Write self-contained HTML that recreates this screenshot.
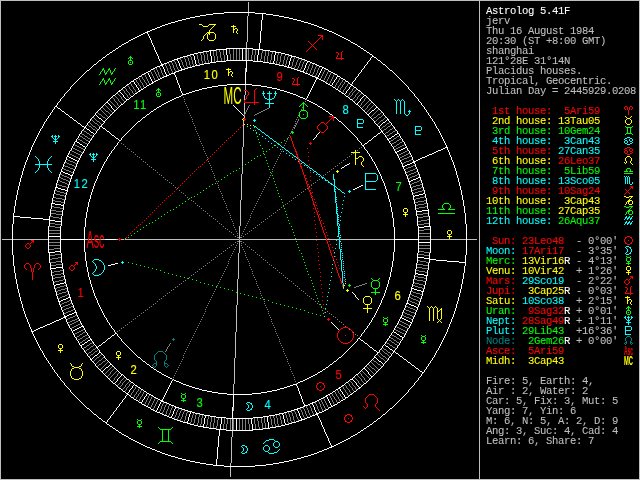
<!DOCTYPE html>
<html><head><meta charset="utf-8"><title>Astrolog 5.41F</title>
<style>
html,body{margin:0;padding:0;background:#000;}
body{width:640px;height:480px;overflow:hidden;}
svg{display:block;}
text{font-family:"Liberation Mono",monospace;font-size:10.6px;letter-spacing:-0.361px;white-space:pre;stroke-width:.08px;}
text.s{font-weight:bold;}
text.h{font-family:"Liberation Sans",sans-serif;font-size:12.5px;letter-spacing:0;stroke-width:.15px;}
text.n{font-family:"Liberation Sans",sans-serif;letter-spacing:0;stroke-width:0;}
#w{width:640px;height:480px;will-change:transform;}
</style></head><body>
<div id="w">
<svg width="640" height="480" viewBox="0 0 640 480">
<rect width="640" height="480" fill="#000"/>
<g shape-rendering="crispEdges" fill="none" stroke-width="1" transform="translate(0 .5)">
<path d="M2 239h475" stroke="#bfbfbf"/>
<path d="M248 2h1M248 3h1M248 4h1M248 5h1M248 6h1M248 7h1M248 8h1M248 9h1M248 10h1M248 11h1M248 12h1M248 13h1M248 14h1M248 15h1M247 16h1M247 17h1M247 18h1M247 19h1M247 20h1M247 21h1M247 22h1M247 23h1M247 24h1M247 25h1M247 26h1M247 27h1M247 28h1M247 29h1M247 30h1M247 31h1M247 32h1M247 33h1M247 34h1M247 35h1M247 36h1M247 37h1M247 38h1M247 39h1M247 40h1M247 41h1M246 42h1M246 43h1M246 44h1M246 45h1M246 46h1M246 47h1M246 48h1M246 49h1M246 50h1M246 51h1M246 52h1M246 53h1M246 54h1M246 55h1M246 56h1M246 57h1M246 58h1M246 59h1M246 60h1M246 61h1M246 62h1M246 63h1M246 64h1M246 65h1M246 66h1M246 67h1M245 68h1M245 69h1M245 70h1M245 71h1M245 72h1M245 73h1M245 74h1M245 75h1M245 76h1M245 77h1M245 78h1M245 79h1M245 80h1M245 81h1M245 82h1M245 83h1M245 84h1M245 85h1M245 86h1M245 87h1M245 88h1M245 89h1M245 90h1M245 91h1M245 92h1M245 93h1M245 94h1M244 95h1M244 96h1M244 97h1M244 98h1M244 99h1M244 100h1M244 101h1M244 102h1M244 103h1M244 104h1M244 105h1M244 106h1M244 107h1M244 108h1M244 109h1M244 110h1M244 111h1M244 112h1M244 113h1M244 114h1M244 115h1M244 116h1M244 117h1M244 118h1M244 119h1M244 120h1M243 121h1M243 122h1M243 123h1M243 124h1M243 125h1M243 126h1M243 127h1M243 128h1M243 129h1M243 130h1M243 131h1M243 132h1M243 133h1M243 134h1M243 135h1M243 136h1M243 137h1M243 138h1M243 139h1M243 140h1M243 141h1M243 142h1M243 143h1M243 144h1M243 145h1M243 146h1M242 147h1M242 148h1M242 149h1M242 150h1M242 151h1M242 152h1M242 153h1M242 154h1M242 155h1M242 156h1M242 157h1M242 158h1M242 159h1M242 160h1M242 161h1M242 162h1M242 163h1M242 164h1M242 165h1M242 166h1M242 167h1M242 168h1M242 169h1M242 170h1M242 171h1M242 172h1M242 173h1M241 174h1M241 175h1M241 176h1M241 177h1M241 178h1M241 179h1M241 180h1M241 181h1M241 182h1M241 183h1M241 184h1M241 185h1M241 186h1M241 187h1M241 188h1M241 189h1M241 190h1M241 191h1M241 192h1M241 193h1M241 194h1M241 195h1M241 196h1M241 197h1M241 198h1M241 199h1M240 200h1M240 201h1M240 202h1M240 203h1M240 204h1M240 205h1M240 206h1M240 207h1M240 208h1M240 209h1M240 210h1M240 211h1M240 212h1M240 213h1M240 214h1M240 215h1M240 216h1M240 217h1M240 218h1M240 219h1M240 220h1M240 221h1M240 222h1M240 223h1M240 224h1M240 225h1M239 226h1M239 227h1M239 228h1M239 229h1M239 230h1M239 231h1M239 232h1M239 233h1M239 234h1M239 235h1M239 236h1M239 237h1M239 238h1M239 239h1M239 240h1M239 241h1M239 242h1M239 243h1M239 244h1M239 245h1M239 246h1M239 247h1M239 248h1M239 249h1M239 250h1M239 251h1M239 252h1M238 253h1M238 254h1M238 255h1M238 256h1M238 257h1M238 258h1M238 259h1M238 260h1M238 261h1M238 262h1M238 263h1M238 264h1M238 265h1M238 266h1M238 267h1M238 268h1M238 269h1M238 270h1M238 271h1M238 272h1M238 273h1M238 274h1M238 275h1M238 276h1M238 277h1M238 278h1M237 279h1M237 280h1M237 281h1M237 282h1M237 283h1M237 284h1M237 285h1M237 286h1M237 287h1M237 288h1M237 289h1M237 290h1M237 291h1M237 292h1M237 293h1M237 294h1M237 295h1M237 296h1M237 297h1M237 298h1M237 299h1M237 300h1M237 301h1M237 302h1M237 303h1M237 304h1M236 305h1M236 306h1M236 307h1M236 308h1M236 309h1M236 310h1M236 311h1M236 312h1M236 313h1M236 314h1M236 315h1M236 316h1M236 317h1M236 318h1M236 319h1M236 320h1M236 321h1M236 322h1M236 323h1M236 324h1M236 325h1M236 326h1M236 327h1M236 328h1M236 329h1M236 330h1M236 331h1M235 332h1M235 333h1M235 334h1M235 335h1M235 336h1M235 337h1M235 338h1M235 339h1M235 340h1M235 341h1M235 342h1M235 343h1M235 344h1M235 345h1M235 346h1M235 347h1M235 348h1M235 349h1M235 350h1M235 351h1M235 352h1M235 353h1M235 354h1M235 355h1M235 356h1M235 357h1M234 358h1M234 359h1M234 360h1M234 361h1M234 362h1M234 363h1M234 364h1M234 365h1M234 366h1M234 367h1M234 368h1M234 369h1M234 370h1M234 371h1M234 372h1M234 373h1M234 374h1M234 375h1M234 376h1M234 377h1M234 378h1M234 379h1M234 380h1M234 381h1M234 382h1M234 383h1M233 384h1M233 385h1M233 386h1M233 387h1M233 388h1M233 389h1M233 390h1M233 391h1M233 392h1M233 393h1M233 394h1M233 395h1M233 396h1M233 397h1M233 398h1M233 399h1M233 400h1M233 401h1M233 402h1M233 403h1M233 404h1M233 405h1M233 406h1M233 407h1M233 408h1M233 409h1M233 410h1M232 411h1M232 412h1M232 413h1M232 414h1M232 415h1M232 416h1M232 417h1M232 418h1M232 419h1M232 420h1M232 421h1M232 422h1M232 423h1M232 424h1M232 425h1M232 426h1M232 427h1M232 428h1M232 429h1M232 430h1M232 431h1M232 432h1M232 433h1M232 434h1M232 435h1M232 436h1M231 437h1M231 438h1M231 439h1M231 440h1M231 441h1M231 442h1M231 443h1M231 444h1M231 445h1M231 446h1M231 447h1M231 448h1M231 449h1M231 450h1M231 451h1M231 452h1M231 453h1M231 454h1M231 455h1M231 456h1M231 457h1M231 458h1M231 459h1M231 460h1M231 461h1M231 462h1M230 463h1M230 464h1M230 465h1M230 466h1M230 467h1M230 468h1M230 469h1M230 470h1M230 471h1M230 472h1M230 473h1M230 474h1M230 475h1M230 476h1" stroke="#bfbfbf"/>
<path d="M233 48h1M236 48h1M239 48h1M245 48h1M219 49h1M223 49h1M229 49h1M233 49h1M236 49h1M239 49h1M245 49h1M248 49h1M252 49h1M255 49h1M213 50h1M216 50h1M219 50h1M223 50h1M229 50h1M233 50h1M236 50h1M239 50h1M245 50h1M248 50h1M252 50h1M255 50h1M262 50h1M265 50h1M206 51h1M213 51h1M216 51h1M219 51h1M223 51h1M229 51h1M233 51h1M236 51h1M239 51h1M245 51h1M248 51h1M252 51h1M255 51h1M262 51h1M265 51h1M268 51h1M272 51h1M200 52h1M203 52h1M206 52h1M213 52h1M216 52h1M220 52h1M223 52h1M229 52h1M233 52h1M236 52h1M239 52h1M245 52h1M248 52h1M252 52h1M255 52h1M262 52h1M265 52h1M268 52h1M272 52h1M278 52h1M196 53h1M200 53h1M203 53h1M206 53h1M213 53h1M216 53h1M220 53h1M223 53h1M229 53h1M233 53h1M236 53h1M239 53h1M245 53h1M248 53h1M252 53h1M255 53h1M261 53h1M265 53h1M268 53h1M272 53h1M278 53h1M281 53h1M196 54h1M200 54h1M203 54h1M207 54h1M213 54h1M216 54h1M220 54h1M223 54h1M230 54h1M233 54h1M236 54h1M239 54h1M245 54h1M248 54h1M252 54h1M255 54h1M261 54h1M265 54h1M268 54h1M271 54h1M278 54h1M281 54h1M285 54h1M190 55h1M197 55h1M201 55h1M204 55h1M207 55h1M213 55h1M216 55h1M220 55h1M224 55h1M230 55h1M233 55h1M236 55h1M239 55h1M245 55h1M248 55h1M251 55h1M254 55h1M261 55h1M265 55h1M268 55h1M271 55h1M277 55h1M281 55h1M285 55h1M288 55h1M187 56h1M190 56h1M197 56h1M201 56h1M204 56h1M207 56h1M214 56h1M217 56h1M220 56h1M224 56h1M230 56h1M233 56h1M236 56h1M239 56h1M245 56h1M248 56h1M251 56h1M254 56h1M261 56h1M264 56h1M267 56h1M271 56h1M277 56h1M280 56h1M284 56h1M288 56h1M184 57h1M187 57h1M191 57h1M197 57h1M201 57h1M204 57h1M207 57h1M214 57h1M217 57h1M220 57h1M224 57h1M230 57h1M233 57h1M236 57h1M239 57h1M245 57h1M248 57h1M251 57h1M254 57h1M261 57h1M264 57h1M267 57h1M271 57h1M277 57h1M280 57h1M284 57h1M287 57h1M294 57h1M180 58h1M184 58h1M188 58h1M191 58h1M197 58h1M201 58h1M204 58h1M207 58h1M214 58h1M217 58h1M221 58h1M224 58h1M230 58h1M233 58h1M236 58h1M239 58h1M245 58h1M248 58h1M251 58h1M254 58h1M261 58h1M264 58h1M267 58h1M271 58h1M277 58h1M280 58h1M284 58h1M287 58h1M294 58h1M298 58h1M180 59h1M185 59h1M188 59h1M191 59h1M198 59h1M201 59h1M204 59h1M207 59h1M214 59h1M217 59h1M221 59h1M224 59h1M230 59h1M233 59h1M236 59h1M239 59h1M245 59h1M248 59h1M251 59h1M254 59h1M260 59h1M264 59h1M267 59h1M271 59h1M277 59h1M280 59h1M284 59h1M287 59h1M293 59h1M298 59h1M301 59h1M174 60h1M181 60h1M185 60h1M188 60h1M192 60h1M198 60h1M201 60h1M204 60h1M208 60h1M214 60h1M217 60h1M221 60h1M224 60h1M251 60h1M254 60h1M260 60h1M264 60h1M267 60h1M270 60h1M277 60h1M280 60h1M283 60h1M286 60h1M293 60h1M297 60h1M301 60h1M304 60h1M171 61h1M174 61h1M181 61h1M185 61h1M189 61h1M192 61h1M198 61h1M202 61h1M205 61h1M208 61h1M214 61h1M217 61h1M260 61h1M264 61h1M267 61h1M270 61h1M276 61h1M280 61h1M283 61h1M286 61h1M293 61h1M297 61h1M300 61h1M304 61h1M168 62h1M171 62h1M175 62h1M182 62h1M186 62h1M189 62h1M192 62h1M198 62h1M202 62h1M205 62h1M208 62h1M270 62h1M276 62h1M279 62h1M283 62h1M286 62h1M292 62h1M296 62h1M300 62h1M303 62h1M310 62h1M168 63h1M172 63h1M175 63h1M182 63h1M186 63h1M189 63h1M192 63h1M199 63h1M202 63h1M205 63h1M276 63h1M279 63h1M283 63h1M286 63h1M292 63h1M296 63h1M299 63h1M303 63h1M310 63h1M313 63h1M165 64h1M169 64h1M172 64h1M176 64h1M182 64h1M186 64h1M189 64h1M193 64h1M199 64h1M279 64h1M282 64h1M285 64h1M292 64h1M296 64h1M299 64h1M302 64h1M309 64h1M313 64h1M165 65h1M169 65h1M173 65h1M176 65h1M183 65h1M186 65h1M190 65h1M193 65h1M282 65h1M285 65h1M292 65h1M295 65h1M299 65h1M302 65h1M309 65h1M312 65h1M316 65h1M159 66h1M166 66h1M170 66h1M173 66h1M176 66h1M183 66h1M187 66h1M190 66h1M291 66h1M295 66h1M298 66h1M302 66h1M308 66h1M312 66h1M316 66h1M319 66h1M159 67h1M166 67h1M170 67h1M173 67h1M177 67h1M184 67h1M187 67h1M291 67h1M294 67h1M298 67h1M301 67h1M308 67h1M312 67h1M315 67h1M319 67h1M156 68h1M160 68h1M167 68h1M170 68h1M174 68h1M177 68h1M184 68h1M294 68h1M297 68h1M301 68h1M308 68h1M311 68h1M315 68h1M318 68h1M153 69h1M156 69h1M160 69h1M167 69h1M171 69h1M174 69h1M178 69h1M297 69h1M300 69h1M307 69h1M311 69h1M314 69h1M318 69h1M325 69h1M154 70h1M157 70h1M161 70h1M167 70h1M171 70h1M175 70h1M178 70h1M300 70h1M307 70h1M310 70h1M314 70h1M317 70h1M324 70h1M150 71h1M154 71h1M157 71h1M161 71h1M168 71h1M172 71h1M175 71h1M306 71h1M310 71h1M314 71h1M317 71h1M324 71h1M328 71h1M151 72h1M155 72h1M158 72h1M161 72h1M168 72h1M172 72h1M306 72h1M310 72h1M313 72h1M317 72h1M323 72h1M327 72h1M331 72h1M151 73h1M155 73h1M158 73h1M162 73h1M169 73h1M309 73h1M313 73h1M316 73h1M323 73h1M327 73h1M330 73h1M144 74h1M152 74h1M156 74h1M158 74h1M162 74h1M169 74h1M309 74h1M312 74h1M316 74h1M322 74h1M326 74h1M330 74h1M334 74h1M145 75h1M152 75h1M156 75h1M159 75h1M163 75h1M312 75h1M315 75h1M322 75h1M326 75h1M329 75h1M333 75h1M141 76h1M145 76h1M153 76h1M157 76h1M159 76h1M163 76h1M315 76h1M321 76h1M325 76h1M329 76h1M333 76h1M138 77h1M142 77h1M146 77h1M153 77h1M157 77h1M160 77h1M321 77h1M325 77h1M328 77h1M332 77h1M340 77h1M139 78h1M142 78h1M146 78h1M154 78h1M158 78h1M160 78h1M320 78h1M324 78h1M328 78h1M332 78h1M339 78h1M135 79h1M139 79h1M143 79h1M147 79h1M154 79h1M158 79h1M320 79h1M324 79h1M327 79h1M331 79h1M339 79h1M343 79h1M136 80h1M140 80h1M144 80h1M147 80h1M155 80h1M323 80h1M327 80h1M331 80h1M338 80h1M342 80h1M136 81h1M140 81h1M144 81h1M148 81h1M326 81h1M330 81h1M338 81h1M342 81h1M345 81h1M137 82h1M141 82h1M145 82h1M148 82h1M326 82h1M330 82h1M337 82h1M341 82h1M344 82h1M130 83h1M138 83h1M142 83h1M146 83h1M149 83h1M329 83h1M336 83h1M340 83h1M344 83h1M348 83h1M131 84h1M138 84h1M142 84h1M146 84h1M336 84h1M340 84h1M343 84h1M347 84h1M127 85h1M131 85h1M139 85h1M143 85h1M147 85h1M335 85h1M339 85h1M342 85h1M347 85h1M128 86h1M132 86h1M140 86h1M143 86h1M335 86h1M338 86h1M342 86h1M346 86h1M124 87h1M129 87h1M133 87h1M140 87h1M144 87h1M334 87h1M338 87h1M341 87h1M345 87h1M354 87h1M125 88h1M129 88h1M133 88h1M141 88h1M337 88h1M340 88h1M345 88h1M353 88h1M122 89h1M126 89h1M130 89h1M134 89h1M340 89h1M344 89h1M352 89h1M356 89h1M123 90h1M126 90h1M131 90h1M135 90h1M339 90h1M343 90h1M352 90h1M355 90h1M124 91h1M127 91h1M132 91h1M135 91h1M343 91h1M351 91h1M354 91h1M359 91h1M124 92h1M128 92h1M132 92h1M136 92h1M342 92h1M350 92h1M353 92h1M358 92h1M117 93h1M125 93h1M129 93h1M133 93h1M349 93h1M352 93h1M357 93h1M361 93h1M118 94h1M126 94h1M129 94h1M134 94h1M349 94h1M352 94h1M356 94h1M360 94h1M114 95h1M119 95h1M127 95h1M130 95h1M348 95h1M351 95h1M355 95h1M359 95h1M115 96h1M120 96h1M127 96h1M131 96h1M347 96h1M350 96h1M355 96h1M358 96h1M112 97h1M116 97h1M121 97h1M128 97h1M349 97h1M354 97h1M357 97h1M366 97h1M113 98h1M117 98h1M121 98h1M353 98h1M357 98h1M365 98h1M114 99h1M118 99h1M122 99h1M352 99h1M356 99h1M364 99h1M109 100h1M114 100h1M118 100h1M123 100h1M355 100h1M364 100h1M369 100h1M110 101h1M115 101h1M119 101h1M124 101h1M354 101h1M363 101h1M368 101h1M111 102h1M116 102h1M120 102h1M362 102h1M367 102h1M371 102h1M112 103h1M117 103h1M121 103h1M361 103h1M366 103h1M370 103h1M104 104h1M113 104h1M117 104h1M361 104h1M365 104h1M369 104h1M374 104h1M105 105h1M114 105h1M118 105h1M360 105h1M364 105h1M368 105h1M373 105h1M106 106h1M115 106h1M119 106h1M359 106h1M363 106h1M367 106h1M372 106h1M102 107h1M107 107h1M116 107h1M362 107h1M367 107h1M371 107h1M103 108h1M108 108h1M117 108h1M361 108h1M366 108h1M370 108h1M100 109h1M104 109h1M109 109h1M365 109h1M369 109h1M378 109h1M101 110h1M105 110h1M110 110h1M364 110h1M368 110h1M377 110h1M102 111h1M106 111h2M111 111h1M367 111h1M376 111h1M97 112h1M103 112h1M108 112h1M112 112h1M366 112h1M375 112h1M381 112h1M98 113h1M104 113h1M109 113h1M374 113h1M380 113h1M99 114h2M105 114h1M110 114h1M373 114h1M378 114h2M383 114h1M101 115h1M106 115h1M372 115h1M377 115h1M382 115h1M102 116h1M107 116h1M371 116h1M376 116h1M381 116h1M93 117h1M103 117h2M108 117h1M370 117h1M374 117h2M379 117h2M385 117h1M94 118h1M105 118h1M373 118h1M378 118h1M384 118h1M91 119h1M95 119h1M106 119h1M372 119h1M377 119h1M383 119h1M92 120h1M96 120h1M376 120h1M381 120h2M93 121h1M97 121h2M375 121h1M380 121h1M89 122h1M94 122h1M99 122h1M379 122h1M389 122h1M90 123h1M95 123h2M100 123h1M378 123h1M387 123h2M87 124h1M91 124h1M97 124h1M101 124h1M377 124h1M386 124h1M391 124h1M88 125h1M92 125h1M98 125h1M385 125h1M390 125h1M89 126h2M93 126h2M99 126h1M383 126h2M388 126h2M91 127h1M95 127h1M382 127h1M387 127h1M393 127h1M92 128h1M96 128h1M381 128h1M386 128h1M392 128h1M93 129h2M97 129h1M384 129h2M390 129h2M83 130h1M95 130h1M383 130h1M389 130h1M395 130h1M84 131h2M96 131h1M382 131h1M388 131h1M393 131h2M86 132h1M386 132h2M392 132h1M81 133h1M87 133h2M385 133h1M390 133h2M82 134h2M89 134h1M384 134h1M389 134h1M79 135h1M84 135h1M90 135h2M387 135h2M399 135h1M80 136h2M85 136h2M92 136h1M386 136h1M397 136h2M82 137h1M87 137h1M396 137h1M77 138h1M83 138h2M88 138h2M394 138h2M401 138h1M78 139h2M85 139h1M90 139h1M393 139h1M399 139h2M80 140h2M86 140h2M391 140h2M397 140h2M82 141h1M88 141h1M390 141h1M396 141h1M402 141h1M83 142h2M394 142h2M400 142h2M85 143h2M392 143h2M399 143h1M74 144h1M87 144h1M391 144h1M397 144h2M404 144h1M75 145h2M396 145h1M402 145h2M77 146h2M394 146h2M400 146h2M72 147h1M79 147h2M393 147h1M398 147h2M73 148h2M81 148h2M396 148h2M75 149h2M83 149h1M395 149h1M71 150h1M77 150h2M407 150h1M72 151h2M79 151h2M405 151h2M74 152h2M81 152h2M403 152h2M69 153h1M76 153h2M401 153h2M408 153h2M70 154h2M78 154h2M399 154h2M406 154h2M72 155h2M80 155h1M398 155h1M404 155h2M74 156h2M402 156h2M409 156h2M76 157h2M400 157h2M407 157h2M78 158h2M399 158h1M404 158h3M66 159h2M402 159h2M411 159h2M68 160h2M400 160h2M409 160h2M70 161h3M406 161h3M65 162h2M73 162h2M404 162h2M67 163h2M75 163h2M402 163h2M69 164h3M63 165h2M72 165h2M413 165h2M65 166h3M74 166h2M411 166h2M68 167h2M408 167h3M62 168h2M70 168h3M406 168h2M415 168h2M64 169h2M73 169h2M404 169h2M413 169h2M66 170h3M410 170h3M69 171h2M408 171h2M416 171h2M71 172h2M406 172h2M414 172h2M411 173h3M60 174h2M409 174h2M417 174h2M62 175h2M407 175h2M415 175h2M64 176h3M412 176h3M59 177h2M67 177h2M410 177h2M61 178h2M69 178h2M408 178h2M63 179h3M58 180h2M66 180h2M419 180h2M60 181h2M68 181h2M417 181h2M62 182h3M414 182h3M65 183h2M412 183h2M57 184h2M67 184h2M410 184h2M420 184h2M59 185h3M416 185h4M62 186h4M413 186h3M66 187h2M411 187h2M421 187h2M417 188h4M414 189h3M55 190h2M412 190h2M422 190h2M57 191h3M418 191h4M60 192h4M415 192h3M54 193h2M64 193h2M413 193h2M56 194h4M60 195h4M64 196h2M424 196h2M53 197h3M420 197h4M56 198h6M416 198h4M62 199h3M414 199h2M52 200h3M424 200h3M55 201h6M418 201h6M61 202h3M415 202h3M424 203h3M418 204h6M415 205h3M51 206h3M425 206h3M54 207h6M419 207h6M60 208h3M416 208h3M51 210h5M56 211h6M50 213h6M423 213h6M56 214h6M417 214h6M50 216h3M423 216h6M53 217h6M417 217h6M59 218h3M427 219h3M421 220h6M418 221h3M49 223h6M424 223h6M55 224h6M418 224h6M49 226h6M55 227h6M424 229h6M49 230h11M419 230h5M48 233h12M419 233h12M419 236h12M48 239h12M419 239h12M48 242h12M48 245h12M419 245h12M54 248h6M419 248h11M49 249h5M418 251h6M424 252h6M55 254h6M418 254h6M49 255h6M424 255h6M58 257h3M52 258h6M49 259h3M417 260h3M56 261h6M420 261h6M50 262h6M426 262h3M56 264h6M417 264h6M50 265h6M423 265h6M417 267h5M422 268h6M60 270h3M416 270h3M54 271h6M419 271h6M51 272h3M425 272h3M61 273h3M55 274h6M52 275h3M61 276h3M415 276h3M55 277h6M418 277h6M52 278h3M424 278h3M63 279h2M414 279h3M59 280h4M417 280h6M55 281h4M423 281h3M53 282h2M413 282h2M415 283h4M419 284h4M64 285h2M413 285h2M423 285h2M60 286h4M415 286h3M57 287h3M418 287h4M55 288h2M65 288h2M422 288h2M61 289h4M58 290h3M56 291h2M66 291h2M411 291h2M62 292h4M413 292h3M59 293h3M416 293h4M57 294h2M67 294h2M410 294h2M420 294h2M65 295h2M412 295h2M62 296h3M414 296h3M60 297h2M409 297h2M417 297h2M58 298h2M411 298h2M419 298h2M413 299h3M69 300h2M408 300h2M416 300h2M67 301h2M410 301h2M418 301h2M64 302h3M412 302h3M62 303h2M70 303h2M415 303h2M60 304h2M68 304h2M417 304h2M65 305h3M63 306h2M71 306h2M406 306h2M61 307h2M69 307h2M408 307h2M66 308h3M410 308h3M64 309h2M73 309h2M404 309h2M413 309h2M62 310h2M71 310h2M406 310h3M415 310h2M68 311h3M409 311h2M66 312h2M403 312h2M411 312h3M64 313h2M405 313h2M414 313h2M407 314h3M75 315h2M402 315h2M410 315h2M73 316h2M404 316h2M412 316h2M70 317h3M406 317h3M68 318h2M77 318h2M409 318h2M66 319h2M75 319h2M411 319h2M72 320h3M78 320h2M399 320h1M70 321h2M76 321h2M400 321h2M68 322h2M74 322h2M402 322h2M72 323h2M80 323h1M398 323h1M404 323h2M70 324h2M78 324h2M399 324h2M406 324h2M69 325h1M76 325h2M401 325h2M408 325h2M74 326h2M396 326h1M403 326h2M72 327h2M397 327h2M405 327h2M71 328h1M399 328h2M407 328h1M83 329h1M395 329h1M401 329h2M81 330h2M396 330h2M403 330h2M79 331h2M85 331h1M398 331h2M405 331h2M77 332h2M83 332h2M400 332h2M75 333h2M82 333h1M402 333h2M74 334h1M80 334h2M87 334h1M391 334h1M404 334h1M79 335h1M85 335h2M392 335h2M77 336h2M83 336h2M394 336h2M76 337h1M82 337h1M88 337h1M390 337h1M396 337h1M80 338h2M86 338h2M391 338h2M397 338h2M78 339h2M85 339h1M388 339h1M393 339h1M399 339h2M77 340h1M83 340h2M389 340h2M394 340h2M401 340h1M82 341h1M391 341h1M396 341h1M80 342h2M92 342h1M386 342h1M392 342h2M397 342h2M79 343h1M90 343h2M387 343h2M394 343h1M399 343h1M89 344h1M94 344h1M389 344h1M395 344h2M87 345h2M93 345h1M390 345h2M397 345h1M86 346h1M91 346h2M392 346h1M84 347h2M90 347h1M96 347h1M382 347h1M393 347h2M83 348h1M89 348h1M95 348h1M383 348h1M395 348h1M87 349h2M93 349h2M381 349h1M384 349h2M86 350h1M92 350h1M97 350h1M382 350h1M386 350h1M85 351h1M91 351h1M95 351h2M383 351h1M387 351h1M89 352h2M94 352h1M379 352h1M384 352h1M388 352h2M88 353h1M93 353h1M380 353h1M385 353h2M390 353h1M87 354h1M91 354h2M101 354h1M377 354h1M381 354h1M387 354h1M391 354h1M90 355h1M100 355h1M378 355h1M382 355h1M388 355h1M89 356h1M99 356h1M379 356h1M383 356h2M389 356h1M97 357h2M103 357h1M380 357h1M385 357h1M96 358h1M102 358h1M381 358h2M386 358h1M95 359h1M101 359h1M106 359h1M372 359h1M383 359h1M387 359h1M94 360h1M99 360h2M105 360h1M373 360h1M384 360h1M93 361h1M98 361h1M103 361h2M108 361h1M370 361h1M374 361h2M385 361h1M97 362h1M102 362h1M107 362h1M371 362h1M376 362h1M96 363h1M101 363h1M106 363h1M372 363h1M377 363h1M95 364h1M99 364h2M105 364h1M368 364h1M373 364h1M378 364h2M98 365h1M104 365h1M369 365h1M374 365h1M380 365h1M97 366h1M103 366h1M112 366h1M366 366h1M370 366h1M375 366h1M381 366h1M102 367h1M111 367h1M367 367h1M371 367h1M376 367h1M101 368h1M110 368h1M114 368h1M368 368h1M372 368h2M377 368h1M100 369h1M109 369h1M113 369h1M369 369h1M374 369h1M378 369h1M108 370h1M112 370h1M117 370h1M361 370h1M370 370h1M375 370h1M107 371h1M111 371h1M116 371h1M362 371h1M371 371h1M376 371h1M106 372h1M110 372h1M115 372h1M119 372h1M359 372h1M363 372h1M372 372h1M105 373h1M110 373h1M114 373h1M118 373h1M360 373h1M364 373h1M373 373h1M104 374h1M109 374h1M113 374h1M117 374h1M361 374h1M365 374h1M374 374h1M108 375h1M112 375h1M117 375h1M357 375h1M361 375h1M366 375h1M107 376h1M111 376h1M116 376h1M358 376h1M362 376h1M367 376h1M110 377h1M115 377h1M124 377h1M354 377h1M359 377h1M363 377h1M368 377h1M109 378h1M114 378h1M123 378h1M355 378h1M360 378h1M364 378h1M369 378h1M114 379h1M122 379h1M126 379h1M356 379h1M361 379h1M364 379h1M113 380h1M121 380h1M125 380h1M357 380h1M361 380h1M365 380h1M112 381h1M120 381h1M124 381h1M129 381h1M350 381h1M358 381h1M362 381h1M366 381h1M120 382h1M123 382h1M128 382h1M131 382h1M347 382h1M351 382h1M358 382h1M363 382h1M119 383h1M122 383h1M127 383h1M130 383h1M348 383h1M352 383h1M359 383h1M364 383h1M118 384h1M122 384h1M126 384h1M129 384h1M344 384h1M349 384h1M352 384h1M360 384h1M117 385h1M121 385h1M125 385h1M129 385h1M345 385h1M349 385h1M353 385h1M361 385h1M120 386h1M125 386h1M128 386h1M136 386h1M342 386h1M346 386h1M350 386h1M354 386h1M119 387h1M124 387h1M127 387h1M135 387h1M343 387h1M346 387h1M351 387h1M355 387h1M123 388h1M126 388h1M135 388h1M139 388h1M343 388h1M347 388h1M352 388h1M355 388h1M122 389h1M126 389h1M134 389h1M138 389h1M344 389h1M348 389h1M352 389h1M356 389h1M125 390h1M133 390h1M138 390h1M141 390h1M337 390h1M345 390h1M349 390h1M353 390h1M124 391h1M133 391h1M137 391h1M140 391h1M144 391h1M334 391h1M338 391h1M345 391h1M349 391h1M354 391h1M132 392h1M136 392h1M140 392h1M143 392h1M335 392h1M338 392h1M346 392h1M350 392h1M131 393h1M136 393h1M139 393h1M143 393h1M331 393h1M335 393h1M339 393h1M347 393h1M351 393h1M131 394h1M135 394h1M138 394h1M142 394h1M332 394h1M336 394h1M340 394h1M347 394h1M130 395h1M134 395h1M138 395h1M142 395h1M149 395h1M329 395h1M332 395h1M336 395h1M340 395h1M348 395h1M134 396h1M137 396h1M141 396h1M148 396h1M152 396h1M330 396h1M333 396h1M337 396h1M341 396h1M133 397h1M136 397h1M140 397h1M148 397h1M151 397h1M330 397h1M334 397h1M338 397h1M342 397h1M136 398h1M140 398h1M147 398h1M151 398h1M155 398h1M323 398h1M331 398h1M334 398h1M338 398h1M342 398h1M135 399h1M139 399h1M147 399h1M150 399h1M154 399h1M158 399h1M320 399h1M324 399h1M331 399h1M335 399h1M339 399h1M343 399h1M139 400h1M146 400h1M150 400h1M154 400h1M157 400h1M318 400h1M321 400h1M324 400h1M332 400h1M336 400h1M339 400h1M138 401h1M146 401h1M149 401h1M153 401h1M157 401h1M318 401h1M321 401h1M325 401h1M332 401h1M336 401h1M340 401h1M145 402h1M149 402h1M153 402h1M156 402h1M163 402h1M315 402h1M319 402h1M322 402h1M325 402h1M333 402h1M337 402h1M145 403h1M148 403h1M152 403h1M156 403h1M163 403h1M166 403h1M315 403h1M319 403h1M322 403h1M326 403h1M333 403h1M144 404h1M148 404h1M152 404h1M155 404h1M162 404h1M166 404h1M169 404h1M309 404h1M316 404h1M320 404h1M323 404h1M326 404h1M334 404h1M147 405h1M151 405h1M155 405h1M162 405h1M165 405h1M169 405h1M309 405h1M316 405h1M320 405h1M323 405h1M327 405h1M147 406h1M151 406h1M154 406h1M161 406h1M165 406h1M168 406h1M172 406h1M306 406h1M310 406h1M317 406h1M320 406h1M324 406h1M327 406h1M150 407h1M154 407h1M161 407h1M164 407h1M168 407h1M172 407h1M303 407h1M306 407h1M310 407h1M317 407h1M321 407h1M324 407h1M328 407h1M153 408h1M161 408h1M164 408h1M168 408h1M171 408h1M178 408h1M300 408h1M303 408h1M307 408h1M311 408h1M317 408h1M321 408h1M325 408h1M153 409h1M160 409h1M164 409h1M167 409h1M171 409h1M178 409h1M181 409h1M300 409h1M304 409h1M307 409h1M311 409h1M318 409h1M322 409h1M325 409h1M160 410h1M163 410h1M167 410h1M170 410h1M177 410h1M181 410h1M184 410h1M294 410h1M301 410h1M304 410h1M308 410h1M311 410h1M318 410h1M322 410h1M159 411h1M163 411h1M166 411h1M170 411h1M177 411h1M180 411h1M184 411h1M187 411h1M291 411h1M294 411h1M301 411h1M305 411h1M308 411h1M312 411h1M319 411h1M159 412h1M162 412h1M166 412h1M170 412h1M176 412h1M180 412h1M183 412h1M187 412h1M288 412h1M291 412h1M295 412h1M302 412h1M305 412h1M308 412h1M312 412h1M319 412h1M162 413h1M166 413h1M169 413h1M176 413h1M179 413h1M183 413h1M186 413h1M193 413h1M196 413h1M285 413h1M288 413h1M292 413h1M295 413h1M302 413h1M305 413h1M309 413h1M313 413h1M165 414h1M169 414h1M176 414h1M179 414h1M182 414h1M186 414h1M193 414h1M196 414h1M199 414h1M279 414h1M285 414h1M289 414h1M292 414h1M296 414h1M302 414h1M306 414h1M309 414h1M313 414h1M165 415h1M168 415h1M175 415h1M179 415h1M182 415h1M186 415h1M192 415h1M195 415h1M199 415h1M202 415h1M273 415h1M276 415h1M279 415h1M286 415h1M289 415h1M292 415h1M296 415h1M303 415h1M306 415h1M310 415h1M168 416h1M175 416h1M178 416h1M182 416h1M185 416h1M192 416h1M195 416h1M199 416h1M202 416h1M208 416h1M270 416h1M273 416h1M276 416h1M280 416h1M286 416h1M289 416h1M293 416h1M296 416h1M303 416h1M307 416h1M310 416h1M174 417h1M178 417h1M181 417h1M185 417h1M192 417h1M195 417h1M198 417h1M202 417h1M208 417h1M211 417h1M214 417h1M218 417h1M261 417h1M264 417h1M270 417h1M273 417h1M276 417h1M280 417h1M286 417h1M290 417h1M293 417h1M297 417h1M304 417h1M307 417h1M174 418h1M177 418h1M181 418h1M185 418h1M191 418h1M195 418h1M198 418h1M201 418h1M208 418h1M211 418h1M214 418h1M218 418h1M224 418h1M227 418h1M254 418h1M257 418h1M261 418h1M264 418h1M270 418h1M274 418h1M277 418h1M280 418h1M287 418h1M290 418h1M293 418h1M297 418h1M304 418h1M177 419h1M180 419h1M185 419h1M191 419h1M194 419h1M198 419h1M201 419h1M207 419h1M211 419h1M214 419h1M218 419h1M224 419h1M227 419h1M230 419h1M233 419h1M239 419h1M242 419h1M245 419h1M248 419h1M254 419h1M257 419h1M261 419h1M264 419h1M271 419h1M274 419h1M277 419h1M280 419h1M287 419h1M290 419h1M293 419h1M298 419h1M180 420h1M184 420h1M191 420h1M194 420h1M198 420h1M201 420h1M207 420h1M211 420h1M214 420h1M217 420h1M224 420h1M227 420h1M230 420h1M233 420h1M239 420h1M242 420h1M245 420h1M248 420h1M254 420h1M257 420h1M261 420h1M264 420h1M271 420h1M274 420h1M277 420h1M281 420h1M287 420h1M290 420h1M294 420h1M298 420h1M184 421h1M191 421h1M194 421h1M198 421h1M201 421h1M207 421h1M211 421h1M214 421h1M217 421h1M224 421h1M227 421h1M230 421h1M233 421h1M239 421h1M242 421h1M245 421h1M248 421h1M254 421h1M258 421h1M261 421h1M264 421h1M271 421h1M274 421h1M277 421h1M281 421h1M287 421h1M291 421h1M294 421h1M190 422h1M194 422h1M198 422h1M201 422h1M207 422h1M210 422h1M214 422h1M217 422h1M224 422h1M227 422h1M230 422h1M233 422h1M239 422h1M242 422h1M245 422h1M248 422h1M254 422h1M258 422h1M261 422h1M264 422h1M271 422h1M274 422h1M277 422h1M281 422h1M288 422h1M291 422h1M190 423h1M193 423h1M197 423h1M201 423h1M207 423h1M210 423h1M213 423h1M217 423h1M224 423h1M227 423h1M230 423h1M233 423h1M239 423h1M242 423h1M245 423h1M248 423h1M254 423h1M258 423h1M262 423h1M265 423h1M271 423h1M274 423h1M277 423h1M281 423h1M288 423h1M193 424h1M197 424h1M200 424h1M207 424h1M210 424h1M213 424h1M217 424h1M223 424h1M226 424h1M230 424h1M233 424h1M239 424h1M242 424h1M245 424h1M249 424h1M255 424h1M258 424h1M262 424h1M265 424h1M271 424h1M275 424h1M278 424h1M282 424h1M197 425h1M200 425h1M206 425h1M210 425h1M213 425h1M217 425h1M223 425h1M226 425h1M230 425h1M233 425h1M239 425h1M242 425h1M245 425h1M249 425h1M255 425h1M258 425h1M262 425h1M265 425h1M272 425h1M275 425h1M278 425h1M282 425h1M200 426h1M206 426h1M210 426h1M213 426h1M216 426h1M223 426h1M226 426h1M230 426h1M233 426h1M239 426h1M242 426h1M245 426h1M249 426h1M255 426h1M258 426h1M262 426h1M265 426h1M272 426h1M275 426h1M278 426h1M206 427h1M210 427h1M213 427h1M216 427h1M223 427h1M226 427h1M230 427h1M233 427h1M239 427h1M242 427h1M245 427h1M249 427h1M255 427h1M259 427h1M262 427h1M265 427h1M272 427h1M213 428h1M216 428h1M223 428h1M226 428h1M230 428h1M233 428h1M239 428h1M242 428h1M245 428h1M249 428h1M255 428h1M259 428h1M262 428h1M265 428h1M223 429h1M226 429h1M230 429h1M233 429h1M239 429h1M242 429h1M245 429h1M249 429h1M255 429h1M259 429h1M233 430h1M239 430h1M242 430h1M245 430h1" stroke="#7f7f7f"/>
<path d="M242 48h1M226 49h1M242 49h1M258 49h1M226 50h1M242 50h1M258 50h1M210 51h1M226 51h1M242 51h1M258 51h1M210 52h1M226 52h1M242 52h1M258 52h1M275 52h1M210 53h1M226 53h1M242 53h1M258 53h1M275 53h1M193 54h1M210 54h1M226 54h1M242 54h1M258 54h1M275 54h1M193 55h1M210 55h1M227 55h1M242 55h1M257 55h1M274 55h1M194 56h1M211 56h1M227 56h1M242 56h1M257 56h1M274 56h1M291 56h1M194 57h1M211 57h1M227 57h1M242 57h1M257 57h1M274 57h1M291 57h1M194 58h1M211 58h1M227 58h1M242 58h1M257 58h1M274 58h1M290 58h1M177 59h1M194 59h1M211 59h1M227 59h1M242 59h1M257 59h1M274 59h1M290 59h1M177 60h1M195 60h1M211 60h1M227 60h1M257 60h1M274 60h1M290 60h1M178 61h1M195 61h1M211 61h1M273 61h1M289 61h1M307 61h1M178 62h1M195 62h1M273 62h1M289 62h1M307 62h1M179 63h1M195 63h1M273 63h1M289 63h1M306 63h1M179 64h1M196 64h1M289 64h1M306 64h1M162 65h1M179 65h1M196 65h1M288 65h1M305 65h1M162 66h1M180 66h1M288 66h1M305 66h1M163 67h1M180 67h1M305 67h1M163 68h1M181 68h1M304 68h1M322 68h1M164 69h1M181 69h1M304 69h1M321 69h1M164 70h1M303 70h1M321 70h1M164 71h1M303 71h1M320 71h1M147 72h1M165 72h1M320 72h1M148 73h1M165 73h1M319 73h1M148 74h1M166 74h1M319 74h1M149 75h1M166 75h1M318 75h1M149 76h1M318 76h1M337 76h1M150 77h1M317 77h1M336 77h1M150 78h1M336 78h1M151 79h1M335 79h1M151 80h1M334 80h1M133 81h1M152 81h1M334 81h1M134 82h1M152 82h1M333 82h1M134 83h1M332 83h1M135 84h1M332 84h1M136 85h1M331 85h1M351 85h1M136 86h1M350 86h1M137 87h1M349 87h1M138 88h1M349 88h1M138 89h1M348 89h1M139 90h1M347 90h1M119 91h1M346 91h1M120 92h1M346 92h1M121 93h1M345 93h1M122 94h1M344 94h1M123 95h1M364 95h1M123 96h1M363 96h1M124 97h1M362 97h1M125 98h1M361 98h1M126 99h1M360 99h1M360 100h1M359 101h1M107 102h1M358 102h1M108 103h1M357 103h1M109 104h1M110 105h1M111 106h1M111 107h1M376 107h1M112 108h1M375 108h1M113 109h1M374 109h1M114 110h1M372 110h2M371 111h1M370 112h1M369 113h1M95 114h1M368 114h1M96 115h1M97 116h1M98 117h1M99 118h2M101 119h1M387 119h1M102 120h1M386 120h1M103 121h1M385 121h1M383 122h2M382 123h1M381 124h1M380 125h1M379 126h1M85 127h1M86 128h1M87 129h2M89 130h1M90 131h1M91 132h2M93 133h1M397 133h1M94 134h1M395 134h2M394 135h1M392 136h2M391 137h1M389 138h2M388 139h1M76 141h1M77 142h2M79 143h1M80 144h2M82 145h1M83 146h2M85 147h1M405 147h2M403 148h2M401 149h2M399 150h2M397 151h2M396 152h1M68 156h1M69 157h2M71 158h2M73 159h2M75 160h2M77 161h1M412 162h2M410 163h2M407 164h3M405 165h2M403 166h2M61 171h2M63 172h2M65 173h3M68 174h2M70 175h2M418 177h2M416 178h2M413 179h3M411 180h2M409 181h2M56 187h2M58 188h3M61 189h4M65 190h2M423 193h2M419 194h4M415 195h4M413 196h2M52 203h3M55 204h6M61 205h3M422 210h6M417 211h5M49 220h6M55 221h6M424 226h6M418 227h6M48 236h12M419 242h12M55 251h6M49 252h6M418 257h6M424 258h6M56 267h6M51 268h5M415 273h3M418 274h6M424 275h3M64 282h2M60 283h4M56 284h4M54 285h2M412 288h2M414 289h3M417 290h4M421 291h2M68 297h2M66 298h2M63 299h3M61 300h2M59 301h2M407 303h2M409 304h2M411 305h3M414 306h2M416 307h2M74 312h2M72 313h2M69 314h3M67 315h2M65 316h2M401 317h1M402 318h2M404 319h2M406 320h2M408 321h2M410 322h1M81 326h2M79 327h2M77 328h2M75 329h2M73 330h2M72 331h1M393 331h1M394 332h2M396 333h1M397 334h2M399 335h1M400 336h2M402 337h1M90 339h1M88 340h2M87 341h1M85 342h2M84 343h1M82 344h2M384 344h1M81 345h1M385 345h1M386 346h2M388 347h1M389 348h1M390 349h2M392 350h1M393 351h1M99 352h1M98 353h1M97 354h1M95 355h2M94 356h1M93 357h1M375 357h1M92 358h1M376 358h1M91 359h1M377 359h1M378 360h1M379 361h2M381 362h1M382 363h1M110 364h1M383 364h1M109 365h1M108 366h1M106 367h2M105 368h1M364 368h1M104 369h1M365 369h1M103 370h1M366 370h1M102 371h1M367 371h1M368 372h1M368 373h1M369 374h1M121 375h1M370 375h1M120 376h1M371 376h1M119 377h1M118 378h1M117 379h1M352 379h1M117 380h1M353 380h1M116 381h1M354 381h1M115 382h1M355 382h1M114 383h1M356 383h1M134 384h1M356 384h1M133 385h1M357 385h1M132 386h1M358 386h1M132 387h1M359 387h1M131 388h1M339 388h1M130 389h1M340 389h1M129 390h1M340 390h1M129 391h1M341 391h1M128 392h1M342 392h1M127 393h1M147 393h1M342 393h1M146 394h1M343 394h1M146 395h1M344 395h1M145 396h1M326 396h1M344 396h1M144 397h1M327 397h1M345 397h1M144 398h1M327 398h1M143 399h1M328 399h1M142 400h1M328 400h1M142 401h1M161 401h1M329 401h1M141 402h1M160 402h1M329 402h1M160 403h1M312 403h1M330 403h1M159 404h1M312 404h1M330 404h1M159 405h1M313 405h1M331 405h1M158 406h1M313 406h1M331 406h1M158 407h1M175 407h1M314 407h1M157 408h1M175 408h1M314 408h1M157 409h1M174 409h1M297 409h1M314 409h1M156 410h1M174 410h1M297 410h1M315 410h1M173 411h1M298 411h1M315 411h1M173 412h1M190 412h1M298 412h1M316 412h1M173 413h1M190 413h1M282 413h1M299 413h1M316 413h1M172 414h1M189 414h1M282 414h1M299 414h1M172 415h1M189 415h1M205 415h1M283 415h1M299 415h1M171 416h1M189 416h1M205 416h1M283 416h1M300 416h1M171 417h1M188 417h1M205 417h1M267 417h1M283 417h1M300 417h1M188 418h1M204 418h1M221 418h1M251 418h1M267 418h1M283 418h1M301 418h1M188 419h1M204 419h1M221 419h1M236 419h1M251 419h1M267 419h1M284 419h1M301 419h1M188 420h1M204 420h1M221 420h1M236 420h1M251 420h1M267 420h1M284 420h1M187 421h1M204 421h1M221 421h1M236 421h1M251 421h1M267 421h1M284 421h1M187 422h1M204 422h1M221 422h1M236 422h1M251 422h1M268 422h1M284 422h1M204 423h1M221 423h1M236 423h1M251 423h1M268 423h1M285 423h1M203 424h1M220 424h1M236 424h1M252 424h1M268 424h1M285 424h1M203 425h1M220 425h1M236 425h1M252 425h1M268 425h1M203 426h1M220 426h1M236 426h1M252 426h1M268 426h1M220 427h1M236 427h1M252 427h1M268 427h1M220 428h1M236 428h1M252 428h1M220 429h1M236 429h1M252 429h1M236 430h1" stroke="#ffffff"/>
<path d="M227 84h25M218 85h9M252 85h9M212 86h6M261 86h6M207 87h5M267 87h5M202 88h5M272 88h5M199 89h3M277 89h3M195 90h4M280 90h4M192 91h3M284 91h3M189 92h3M287 92h3M186 93h3M290 93h3M183 94h3M293 94h3M181 95h2M296 95h2M179 96h2M298 96h2M176 97h3M300 97h3M174 98h2M303 98h2M172 99h2M305 99h2M170 100h2M307 100h2M168 101h2M309 101h2M166 102h2M311 102h2M164 103h2M313 103h2M162 104h2M315 104h2M161 105h1M317 105h1M159 106h2M318 106h2M157 107h2M320 107h2M156 108h1M322 108h1M154 109h2M323 109h2M153 110h1M325 110h1M151 111h2M326 111h2M150 112h1M328 112h1M149 113h1M329 113h1M147 114h2M330 114h2M146 115h1M332 115h1M145 116h1M333 116h1M143 117h2M334 117h2M142 118h1M336 118h1M141 119h1M337 119h1M140 120h1M338 120h1M138 121h2M339 121h2M137 122h1M341 122h1M136 123h1M342 123h1M135 124h1M343 124h1M134 125h1M344 125h1M133 126h1M345 126h1M132 127h1M346 127h1M131 128h1M347 128h1M130 129h1M348 129h1M129 130h1M349 130h1M128 131h1M350 131h1M127 132h1M351 132h1M126 133h1M352 133h1M125 134h1M353 134h1M124 135h1M354 135h1M123 136h1M355 136h1M122 137h1M356 137h1M121 138h1M357 138h1M121 139h1M357 139h1M120 140h1M358 140h1M119 141h1M359 141h1M118 142h1M360 142h1M117 143h1M361 143h1M117 144h1M361 144h1M116 145h1M362 145h1M115 146h1M363 146h1M114 147h1M364 147h1M114 148h1M364 148h1M113 149h1M365 149h1M112 150h1M366 150h1M111 151h1M367 151h1M111 152h1M367 152h1M110 153h1M368 153h1M109 154h1M369 154h1M109 155h1M369 155h1M108 156h1M370 156h1M107 157h1M371 157h1M107 158h1M371 158h1M106 159h1M372 159h1M106 160h1M372 160h1M105 161h1M373 161h1M104 162h1M374 162h1M104 163h1M374 163h1M103 164h1M375 164h1M103 165h1M375 165h1M102 166h1M376 166h1M102 167h1M376 167h1M101 168h1M377 168h1M101 169h1M377 169h1M100 170h1M378 170h1M100 171h1M378 171h1M99 172h1M379 172h1M99 173h1M379 173h1M98 174h1M380 174h1M98 175h1M380 175h1M97 176h1M381 176h1M97 177h1M381 177h1M97 178h1M381 178h1M96 179h1M382 179h1M96 180h1M382 180h1M95 181h1M383 181h1M95 182h1M383 182h1M94 183h1M384 183h1M94 184h1M384 184h1M94 185h1M384 185h1M93 186h1M385 186h1M93 187h1M385 187h1M93 188h1M385 188h1M92 189h1M386 189h1M92 190h1M386 190h1M92 191h1M386 191h1M91 192h1M387 192h1M91 193h1M387 193h1M91 194h1M387 194h1M90 195h1M388 195h1M90 196h1M388 196h1M90 197h1M388 197h1M90 198h1M388 198h1M89 199h1M389 199h1M89 200h1M389 200h1M89 201h1M389 201h1M88 202h1M390 202h1M88 203h1M390 203h1M88 204h1M390 204h1M88 205h1M390 205h1M88 206h1M390 206h1M87 207h1M391 207h1M87 208h1M391 208h1M87 209h1M391 209h1M87 210h1M391 210h1M87 211h1M391 211h1M86 212h1M392 212h1M86 213h1M392 213h1M86 214h1M392 214h1M86 215h1M392 215h1M86 216h1M392 216h1M86 217h1M392 217h1M85 218h1M393 218h1M85 219h1M393 219h1M85 220h1M393 220h1M85 221h1M393 221h1M85 222h1M393 222h1M85 223h1M393 223h1M85 224h1M393 224h1M85 225h1M393 225h1M85 226h1M393 226h1M84 227h1M394 227h1M84 228h1M394 228h1M84 229h1M394 229h1M84 230h1M394 230h1M84 231h1M394 231h1M84 232h1M394 232h1M84 233h1M394 233h1M84 234h1M394 234h1M84 235h1M394 235h1M84 236h1M394 236h1M84 237h1M394 237h1M84 238h1M394 238h1M84 239h1M394 239h1M84 240h1M394 240h1M84 241h1M394 241h1M84 242h1M394 242h1M84 243h1M394 243h1M84 244h1M394 244h1M84 245h1M394 245h1M84 246h1M394 246h1M84 247h1M394 247h1M84 248h1M394 248h1M84 249h1M394 249h1M84 250h1M394 250h1M84 251h1M394 251h1M85 252h1M393 252h1M85 253h1M393 253h1M85 254h1M393 254h1M85 255h1M393 255h1M85 256h1M393 256h1M85 257h1M393 257h1M85 258h1M393 258h1M85 259h1M393 259h1M85 260h1M393 260h1M86 261h1M392 261h1M86 262h1M392 262h1M86 263h1M392 263h1M86 264h1M392 264h1M86 265h1M392 265h1M86 266h1M392 266h1M87 267h1M391 267h1M87 268h1M391 268h1M87 269h1M391 269h1M87 270h1M391 270h1M87 271h1M391 271h1M88 272h1M390 272h1M88 273h1M390 273h1M88 274h1M390 274h1M88 275h1M390 275h1M88 276h1M390 276h1M89 277h1M389 277h1M89 278h1M389 278h1M89 279h1M389 279h1M90 280h1M388 280h1M90 281h1M388 281h1M90 282h1M388 282h1M90 283h1M388 283h1M91 284h1M387 284h1M91 285h1M387 285h1M91 286h1M387 286h1M92 287h1M386 287h1M92 288h1M386 288h1M92 289h1M386 289h1M93 290h1M385 290h1M93 291h1M385 291h1M93 292h1M385 292h1M94 293h1M384 293h1M94 294h1M384 294h1M94 295h1M384 295h1M95 296h1M383 296h1M95 297h1M383 297h1M96 298h1M382 298h1M96 299h1M382 299h1M97 300h1M381 300h1M97 301h1M381 301h1M97 302h1M381 302h1M98 303h1M380 303h1M98 304h1M380 304h1M99 305h1M379 305h1M99 306h1M379 306h1M100 307h1M378 307h1M100 308h1M378 308h1M101 309h1M377 309h1M101 310h1M377 310h1M102 311h1M376 311h1M102 312h1M376 312h1M103 313h1M375 313h1M103 314h1M375 314h1M104 315h1M374 315h1M104 316h1M374 316h1M105 317h1M373 317h1M106 318h1M372 318h1M106 319h1M372 319h1M107 320h1M371 320h1M107 321h1M371 321h1M108 322h1M370 322h1M109 323h1M369 323h1M109 324h1M369 324h1M110 325h1M368 325h1M111 326h1M367 326h1M111 327h1M367 327h1M112 328h1M366 328h1M113 329h1M365 329h1M114 330h1M364 330h1M114 331h1M364 331h1M115 332h1M363 332h1M116 333h1M362 333h1M117 334h1M361 334h1M117 335h1M361 335h1M118 336h1M360 336h1M119 337h1M359 337h1M120 338h1M358 338h1M121 339h1M357 339h1M121 340h1M357 340h1M122 341h1M356 341h1M123 342h1M355 342h1M124 343h1M354 343h1M125 344h1M353 344h1M126 345h1M352 345h1M127 346h1M351 346h1M128 347h1M350 347h1M129 348h1M349 348h1M130 349h1M348 349h1M131 350h1M347 350h1M132 351h1M346 351h1M133 352h1M345 352h1M134 353h1M344 353h1M135 354h1M343 354h1M136 355h1M342 355h1M137 356h1M341 356h1M138 357h2M339 357h2M140 358h1M338 358h1M141 359h1M337 359h1M142 360h1M336 360h1M143 361h2M334 361h2M145 362h1M333 362h1M146 363h1M332 363h1M147 364h2M330 364h2M149 365h1M329 365h1M150 366h1M328 366h1M151 367h2M326 367h2M153 368h1M325 368h1M154 369h2M323 369h2M156 370h1M322 370h1M157 371h2M320 371h2M159 372h2M318 372h2M161 373h1M317 373h1M162 374h2M315 374h2M164 375h2M313 375h2M166 376h2M311 376h2M168 377h2M309 377h2M170 378h2M307 378h2M172 379h2M305 379h2M174 380h2M303 380h2M176 381h3M300 381h3M179 382h2M298 382h2M181 383h2M296 383h2M183 384h3M293 384h3M186 385h3M290 385h3M189 386h3M287 386h3M192 387h3M284 387h3M195 388h4M280 388h4M199 389h3M277 389h3M202 390h5M272 390h5M207 391h5M267 391h5M212 392h6M261 392h6M218 393h9M252 393h9M227 394h25" stroke="#ffffff"/>
<path d="M226 60h27M216 61h10M253 61h10M210 62h6M263 62h6M204 63h6M269 63h6M200 64h4M275 64h4M195 65h5M279 65h5M192 66h3M284 66h3M188 67h4M287 67h4M185 68h3M291 68h3M182 69h3M294 69h3M179 70h3M297 70h3M176 71h3M300 71h3M174 72h2M303 72h2M171 73h3M305 73h3M169 74h2M308 74h2M167 75h2M310 75h2M164 76h3M312 76h3M162 77h2M315 77h2M160 78h2M317 78h2M158 79h2M319 79h2M156 80h2M321 80h2M154 81h2M323 81h2M153 82h1M325 82h1M151 83h2M326 83h2M149 84h2M328 84h2M147 85h2M330 85h2M146 86h1M332 86h1M144 87h2M333 87h2M143 88h1M335 88h1M141 89h2M336 89h2M140 90h1M338 90h1M138 91h2M339 91h2M137 92h1M341 92h1M135 93h2M342 93h2M134 94h1M344 94h1M133 95h1M345 95h1M131 96h2M346 96h2M130 97h1M348 97h1M129 98h1M349 98h1M127 99h2M350 99h2M126 100h1M352 100h1M125 101h1M353 101h1M124 102h1M354 102h1M123 103h1M355 103h1M121 104h2M356 104h2M120 105h1M358 105h1M119 106h1M359 106h1M118 107h1M360 107h1M117 108h1M361 108h1M116 109h1M362 109h1M115 110h1M363 110h1M114 111h1M364 111h1M113 112h1M365 112h1M112 113h1M366 113h1M111 114h1M367 114h1M110 115h1M368 115h1M109 116h1M369 116h1M108 117h1M370 117h1M107 118h1M371 118h1M106 119h1M372 119h1M105 120h1M373 120h1M104 121h1M374 121h1M104 122h1M374 122h1M103 123h1M375 123h1M102 124h1M376 124h1M101 125h1M377 125h1M100 126h1M378 126h1M99 127h1M379 127h1M99 128h1M379 128h1M98 129h1M380 129h1M97 130h1M381 130h1M96 131h1M382 131h1M96 132h1M382 132h1M95 133h1M383 133h1M94 134h1M384 134h1M93 135h1M385 135h1M93 136h1M385 136h1M92 137h1M386 137h1M91 138h1M387 138h1M91 139h1M387 139h1M90 140h1M388 140h1M89 141h1M389 141h1M89 142h1M389 142h1M88 143h1M390 143h1M87 144h1M391 144h1M87 145h1M391 145h1M86 146h1M392 146h1M85 147h1M393 147h1M85 148h1M393 148h1M84 149h1M394 149h1M84 150h1M394 150h1M83 151h1M395 151h1M83 152h1M395 152h1M82 153h1M396 153h1M81 154h1M397 154h1M81 155h1M397 155h1M80 156h1M398 156h1M80 157h1M398 157h1M79 158h1M399 158h1M79 159h1M399 159h1M78 160h1M400 160h1M78 161h1M400 161h1M77 162h1M401 162h1M77 163h1M401 163h1M76 164h1M402 164h1M76 165h1M402 165h1M76 166h1M402 166h1M75 167h1M403 167h1M75 168h1M403 168h1M74 169h1M404 169h1M74 170h1M404 170h1M73 171h1M405 171h1M73 172h1M405 172h1M73 173h1M405 173h1M72 174h1M406 174h1M72 175h1M406 175h1M71 176h1M407 176h1M71 177h1M407 177h1M71 178h1M407 178h1M70 179h1M408 179h1M70 180h1M408 180h1M70 181h1M408 181h1M69 182h1M409 182h1M69 183h1M409 183h1M69 184h1M409 184h1M68 185h1M410 185h1M68 186h1M410 186h1M68 187h1M410 187h1M67 188h1M411 188h1M67 189h1M411 189h1M67 190h1M411 190h1M67 191h1M411 191h1M66 192h1M412 192h1M66 193h1M412 193h1M66 194h1M412 194h1M65 195h1M413 195h1M65 196h1M413 196h1M65 197h1M413 197h1M65 198h1M413 198h1M65 199h1M413 199h1M64 200h1M414 200h1M64 201h1M414 201h1M64 202h1M414 202h1M64 203h1M414 203h1M63 204h1M415 204h1M63 205h1M415 205h1M63 206h1M415 206h1M63 207h1M415 207h1M63 208h1M415 208h1M63 209h1M415 209h1M62 210h1M416 210h1M62 211h1M416 211h1M62 212h1M416 212h1M62 213h1M416 213h1M62 214h1M416 214h1M62 215h1M416 215h1M61 216h1M417 216h1M61 217h1M417 217h1M61 218h1M417 218h1M61 219h1M417 219h1M61 220h1M417 220h1M61 221h1M417 221h1M61 222h1M417 222h1M61 223h1M417 223h1M61 224h1M417 224h1M61 225h1M417 225h1M60 226h1M418 226h1M60 227h1M418 227h1M60 228h1M418 228h1M60 229h1M418 229h1M60 230h1M418 230h1M60 231h1M418 231h1M60 232h1M418 232h1M60 233h1M418 233h1M60 234h1M418 234h1M60 235h1M418 235h1M60 236h1M418 236h1M60 237h1M418 237h1M60 238h1M418 238h1M60 239h1M418 239h1M60 240h1M418 240h1M60 241h1M418 241h1M60 242h1M418 242h1M60 243h1M418 243h1M60 244h1M418 244h1M60 245h1M418 245h1M60 246h1M418 246h1M60 247h1M418 247h1M60 248h1M418 248h1M60 249h1M418 249h1M60 250h1M418 250h1M60 251h1M418 251h1M60 252h1M418 252h1M61 253h1M417 253h1M61 254h1M417 254h1M61 255h1M417 255h1M61 256h1M417 256h1M61 257h1M417 257h1M61 258h1M417 258h1M61 259h1M417 259h1M61 260h1M417 260h1M61 261h1M417 261h1M61 262h1M417 262h1M62 263h1M416 263h1M62 264h1M416 264h1M62 265h1M416 265h1M62 266h1M416 266h1M62 267h1M416 267h1M62 268h1M416 268h1M63 269h1M415 269h1M63 270h1M415 270h1M63 271h1M415 271h1M63 272h1M415 272h1M63 273h1M415 273h1M63 274h1M415 274h1M64 275h1M414 275h1M64 276h1M414 276h1M64 277h1M414 277h1M64 278h1M414 278h1M65 279h1M413 279h1M65 280h1M413 280h1M65 281h1M413 281h1M65 282h1M413 282h1M65 283h1M413 283h1M66 284h1M412 284h1M66 285h1M412 285h1M66 286h1M412 286h1M67 287h1M411 287h1M67 288h1M411 288h1M67 289h1M411 289h1M67 290h1M411 290h1M68 291h1M410 291h1M68 292h1M410 292h1M68 293h1M410 293h1M69 294h1M409 294h1M69 295h1M409 295h1M69 296h1M409 296h1M70 297h1M408 297h1M70 298h1M408 298h1M70 299h1M408 299h1M71 300h1M407 300h1M71 301h1M407 301h1M71 302h1M407 302h1M72 303h1M406 303h1M72 304h1M406 304h1M73 305h1M405 305h1M73 306h1M405 306h1M73 307h1M405 307h1M74 308h1M404 308h1M74 309h1M404 309h1M75 310h1M403 310h1M75 311h1M403 311h1M76 312h1M402 312h1M76 313h1M402 313h1M76 314h1M402 314h1M77 315h1M401 315h1M77 316h1M401 316h1M78 317h1M400 317h1M78 318h1M400 318h1M79 319h1M399 319h1M79 320h1M399 320h1M80 321h1M398 321h1M80 322h1M398 322h1M81 323h1M397 323h1M81 324h1M397 324h1M82 325h1M396 325h1M83 326h1M395 326h1M83 327h1M395 327h1M84 328h1M394 328h1M84 329h1M394 329h1M85 330h1M393 330h1M85 331h1M393 331h1M86 332h1M392 332h1M87 333h1M391 333h1M87 334h1M391 334h1M88 335h1M390 335h1M89 336h1M389 336h1M89 337h1M389 337h1M90 338h1M388 338h1M91 339h1M387 339h1M91 340h1M387 340h1M92 341h1M386 341h1M93 342h1M385 342h1M93 343h1M385 343h1M94 344h1M384 344h1M95 345h1M383 345h1M96 346h1M382 346h1M96 347h1M382 347h1M97 348h1M381 348h1M98 349h1M380 349h1M99 350h1M379 350h1M99 351h1M379 351h1M100 352h1M378 352h1M101 353h1M377 353h1M102 354h1M376 354h1M103 355h1M375 355h1M104 356h1M374 356h1M104 357h1M374 357h1M105 358h1M373 358h1M106 359h1M372 359h1M107 360h1M371 360h1M108 361h1M370 361h1M109 362h1M369 362h1M110 363h1M368 363h1M111 364h1M367 364h1M112 365h1M366 365h1M113 366h1M365 366h1M114 367h1M364 367h1M115 368h1M363 368h1M116 369h1M362 369h1M117 370h1M361 370h1M118 371h1M360 371h1M119 372h1M359 372h1M120 373h1M358 373h1M121 374h2M356 374h2M123 375h1M355 375h1M124 376h1M354 376h1M125 377h1M353 377h1M126 378h1M352 378h1M127 379h2M350 379h2M129 380h1M349 380h1M130 381h1M348 381h1M131 382h2M346 382h2M133 383h1M345 383h1M134 384h1M344 384h1M135 385h2M342 385h2M137 386h1M341 386h1M138 387h2M339 387h2M140 388h1M338 388h1M141 389h2M336 389h2M143 390h1M335 390h1M144 391h2M333 391h2M146 392h1M332 392h1M147 393h2M330 393h2M149 394h2M328 394h2M151 395h2M326 395h2M153 396h1M325 396h1M154 397h2M323 397h2M156 398h2M321 398h2M158 399h2M319 399h2M160 400h2M317 400h2M162 401h2M315 401h2M164 402h3M312 402h3M167 403h2M310 403h2M169 404h2M308 404h2M171 405h3M305 405h3M174 406h2M303 406h2M176 407h3M300 407h3M179 408h3M297 408h3M182 409h3M294 409h3M185 410h3M291 410h3M188 411h4M287 411h4M192 412h3M284 412h3M195 413h5M279 413h5M200 414h4M275 414h4M204 415h6M269 415h6M210 416h6M263 416h6M216 417h10M253 417h10M226 418h27" stroke="#ffffff"/>
<path d="M226 48h27M216 49h10M253 49h10M209 50h7M263 50h7M203 51h6M270 51h6M198 52h5M276 52h5M194 53h4M281 53h4M190 54h4M285 54h4M187 55h3M289 55h3M183 56h4M292 56h4M180 57h3M296 57h3M177 58h3M299 58h3M174 59h3M302 59h3M172 60h2M305 60h2M169 61h3M307 61h3M167 62h2M310 62h2M164 63h3M312 63h3M162 64h2M315 64h2M160 65h2M317 65h2M157 66h3M319 66h3M155 67h2M322 67h2M153 68h2M324 68h2M151 69h2M326 69h2M150 70h1M328 70h1M148 71h2M329 71h2M146 72h2M331 72h2M144 73h2M333 73h2M142 74h2M335 74h2M141 75h1M337 75h1M139 76h2M338 76h2M138 77h1M340 77h1M136 78h2M341 78h2M134 79h2M343 79h2M133 80h1M345 80h1M131 81h2M346 81h2M130 82h1M348 82h1M129 83h1M349 83h1M127 84h2M350 84h2M126 85h1M352 85h1M125 86h1M353 86h1M123 87h2M354 87h2M122 88h1M356 88h1M121 89h1M357 89h1M119 90h2M358 90h2M118 91h1M360 91h1M117 92h1M361 92h1M116 93h1M362 93h1M115 94h1M363 94h1M113 95h2M364 95h2M112 96h1M366 96h1M111 97h1M367 97h1M110 98h1M368 98h1M109 99h1M369 99h1M108 100h1M370 100h1M107 101h1M371 101h1M106 102h1M372 102h1M105 103h1M373 103h1M104 104h1M374 104h1M103 105h1M375 105h1M102 106h1M376 106h1M101 107h1M377 107h1M100 108h1M378 108h1M99 109h1M379 109h1M98 110h1M380 110h1M97 111h1M381 111h1M96 112h1M382 112h1M95 113h1M383 113h1M95 114h1M383 114h1M94 115h1M384 115h1M93 116h1M385 116h1M92 117h1M386 117h1M91 118h1M387 118h1M90 119h1M388 119h1M90 120h1M388 120h1M89 121h1M389 121h1M88 122h1M390 122h1M87 123h1M391 123h1M87 124h1M391 124h1M86 125h1M392 125h1M85 126h1M393 126h1M84 127h1M394 127h1M84 128h1M394 128h1M83 129h1M395 129h1M82 130h1M396 130h1M81 131h1M397 131h1M81 132h1M397 132h1M80 133h1M398 133h1M79 134h1M399 134h1M79 135h1M399 135h1M78 136h1M400 136h1M78 137h1M400 137h1M77 138h1M401 138h1M76 139h1M402 139h1M76 140h1M402 140h1M75 141h1M403 141h1M74 142h1M404 142h1M74 143h1M404 143h1M73 144h1M405 144h1M73 145h1M405 145h1M72 146h1M406 146h1M72 147h1M406 147h1M71 148h1M407 148h1M71 149h1M407 149h1M70 150h1M408 150h1M69 151h1M409 151h1M69 152h1M409 152h1M68 153h1M410 153h1M68 154h1M410 154h1M67 155h1M411 155h1M67 156h1M411 156h1M66 157h1M412 157h1M66 158h1M412 158h1M66 159h1M412 159h1M65 160h1M413 160h1M65 161h1M413 161h1M64 162h1M414 162h1M64 163h1M414 163h1M63 164h1M415 164h1M63 165h1M415 165h1M63 166h1M415 166h1M62 167h1M416 167h1M62 168h1M416 168h1M61 169h1M417 169h1M61 170h1M417 170h1M61 171h1M417 171h1M60 172h1M418 172h1M60 173h1M418 173h1M59 174h1M419 174h1M59 175h1M419 175h1M59 176h1M419 176h1M58 177h1M420 177h1M58 178h1M420 178h1M58 179h1M420 179h1M57 180h1M421 180h1M57 181h1M421 181h1M57 182h1M421 182h1M56 183h1M422 183h1M56 184h1M422 184h1M56 185h1M422 185h1M56 186h1M422 186h1M55 187h1M423 187h1M55 188h1M423 188h1M55 189h1M423 189h1M54 190h1M424 190h1M54 191h1M424 191h1M54 192h1M424 192h1M54 193h1M424 193h1M53 194h1M425 194h1M53 195h1M425 195h1M53 196h1M425 196h1M53 197h1M425 197h1M52 198h1M426 198h1M52 199h1M426 199h1M52 200h1M426 200h1M52 201h1M426 201h1M52 202h1M426 202h1M51 203h1M427 203h1M51 204h1M427 204h1M51 205h1M427 205h1M51 206h1M427 206h1M51 207h1M427 207h1M51 208h1M427 208h1M50 209h1M428 209h1M50 210h1M428 210h1M50 211h1M428 211h1M50 212h1M428 212h1M50 213h1M428 213h1M50 214h1M428 214h1M50 215h1M428 215h1M49 216h1M429 216h1M49 217h1M429 217h1M49 218h1M429 218h1M49 219h1M429 219h1M49 220h1M429 220h1M49 221h1M429 221h1M49 222h1M429 222h1M49 223h1M429 223h1M49 224h1M429 224h1M49 225h1M429 225h1M48 226h1M430 226h1M48 227h1M430 227h1M48 228h1M430 228h1M48 229h1M430 229h1M48 230h1M430 230h1M48 231h1M430 231h1M48 232h1M430 232h1M48 233h1M430 233h1M48 234h1M430 234h1M48 235h1M430 235h1M48 236h1M430 236h1M48 237h1M430 237h1M48 238h1M430 238h1M48 239h1M430 239h1M48 240h1M430 240h1M48 241h1M430 241h1M48 242h1M430 242h1M48 243h1M430 243h1M48 244h1M430 244h1M48 245h1M430 245h1M48 246h1M430 246h1M48 247h1M430 247h1M48 248h1M430 248h1M48 249h1M430 249h1M48 250h1M430 250h1M48 251h1M430 251h1M48 252h1M430 252h1M49 253h1M429 253h1M49 254h1M429 254h1M49 255h1M429 255h1M49 256h1M429 256h1M49 257h1M429 257h1M49 258h1M429 258h1M49 259h1M429 259h1M49 260h1M429 260h1M49 261h1M429 261h1M49 262h1M429 262h1M50 263h1M428 263h1M50 264h1M428 264h1M50 265h1M428 265h1M50 266h1M428 266h1M50 267h1M428 267h1M50 268h1M428 268h1M50 269h1M428 269h1M51 270h1M427 270h1M51 271h1M427 271h1M51 272h1M427 272h1M51 273h1M427 273h1M51 274h1M427 274h1M51 275h1M427 275h1M52 276h1M426 276h1M52 277h1M426 277h1M52 278h1M426 278h1M52 279h1M426 279h1M52 280h1M426 280h1M53 281h1M425 281h1M53 282h1M425 282h1M53 283h1M425 283h1M53 284h1M425 284h1M54 285h1M424 285h1M54 286h1M424 286h1M54 287h1M424 287h1M54 288h1M424 288h1M55 289h1M423 289h1M55 290h1M423 290h1M55 291h1M423 291h1M56 292h1M422 292h1M56 293h1M422 293h1M56 294h1M422 294h1M56 295h1M422 295h1M57 296h1M421 296h1M57 297h1M421 297h1M57 298h1M421 298h1M58 299h1M420 299h1M58 300h1M420 300h1M58 301h1M420 301h1M59 302h1M419 302h1M59 303h1M419 303h1M59 304h1M419 304h1M60 305h1M418 305h1M60 306h1M418 306h1M61 307h1M417 307h1M61 308h1M417 308h1M61 309h1M417 309h1M62 310h1M416 310h1M62 311h1M416 311h1M63 312h1M415 312h1M63 313h1M415 313h1M63 314h1M415 314h1M64 315h1M414 315h1M64 316h1M414 316h1M65 317h1M413 317h1M65 318h1M413 318h1M66 319h1M412 319h1M66 320h1M412 320h1M66 321h1M412 321h1M67 322h1M411 322h1M67 323h1M411 323h1M68 324h1M410 324h1M68 325h1M410 325h1M69 326h1M409 326h1M69 327h1M409 327h1M70 328h1M408 328h1M71 329h1M407 329h1M71 330h1M407 330h1M72 331h1M406 331h1M72 332h1M406 332h1M73 333h1M405 333h1M73 334h1M405 334h1M74 335h1M404 335h1M74 336h1M404 336h1M75 337h1M403 337h1M76 338h1M402 338h1M76 339h1M402 339h1M77 340h1M401 340h1M78 341h1M400 341h1M78 342h1M400 342h1M79 343h1M399 343h1M79 344h1M399 344h1M80 345h1M398 345h1M81 346h1M397 346h1M81 347h1M397 347h1M82 348h1M396 348h1M83 349h1M395 349h1M84 350h1M394 350h1M84 351h1M394 351h1M85 352h1M393 352h1M86 353h1M392 353h1M87 354h1M391 354h1M87 355h1M391 355h1M88 356h1M390 356h1M89 357h1M389 357h1M90 358h1M388 358h1M90 359h1M388 359h1M91 360h1M387 360h1M92 361h1M386 361h1M93 362h1M385 362h1M94 363h1M384 363h1M95 364h1M383 364h1M95 365h1M383 365h1M96 366h1M382 366h1M97 367h1M381 367h1M98 368h1M380 368h1M99 369h1M379 369h1M100 370h1M378 370h1M101 371h1M377 371h1M102 372h1M376 372h1M103 373h1M375 373h1M104 374h1M374 374h1M105 375h1M373 375h1M106 376h1M372 376h1M107 377h1M371 377h1M108 378h1M370 378h1M109 379h1M369 379h1M110 380h1M368 380h1M111 381h1M367 381h1M112 382h1M366 382h1M113 383h2M364 383h2M115 384h1M363 384h1M116 385h1M362 385h1M117 386h1M361 386h1M118 387h1M360 387h1M119 388h2M358 388h2M121 389h1M357 389h1M122 390h1M356 390h1M123 391h2M354 391h2M125 392h1M353 392h1M126 393h1M352 393h1M127 394h2M350 394h2M129 395h1M349 395h1M130 396h1M348 396h1M131 397h2M346 397h2M133 398h1M345 398h1M134 399h2M343 399h2M136 400h2M341 400h2M138 401h1M340 401h1M139 402h2M338 402h2M141 403h1M337 403h1M142 404h2M335 404h2M144 405h2M333 405h2M146 406h2M331 406h2M148 407h2M329 407h2M150 408h1M328 408h1M151 409h2M326 409h2M153 410h2M324 410h2M155 411h2M322 411h2M157 412h3M319 412h3M160 413h2M317 413h2M162 414h2M315 414h2M164 415h3M312 415h3M167 416h2M310 416h2M169 417h3M307 417h3M172 418h2M305 418h2M174 419h3M302 419h3M177 420h3M299 420h3M180 421h3M296 421h3M183 422h4M292 422h4M187 423h3M289 423h3M190 424h4M285 424h4M194 425h4M281 425h4M198 426h5M276 426h5M203 427h6M270 427h6M209 428h7M263 428h7M216 429h10M253 429h10M226 430h27" stroke="#ffffff"/>
<path d="M224 12h31M213 13h11M255 13h11M206 14h7M266 14h7M200 15h6M273 15h6M195 16h5M279 16h5M190 17h5M284 17h5M186 18h4M289 18h4M182 19h4M293 19h4M178 20h4M297 20h4M175 21h3M301 21h3M171 22h4M304 22h4M168 23h3M308 23h3M165 24h3M311 24h3M162 25h3M314 25h3M160 26h2M317 26h2M157 27h3M319 27h3M155 28h2M322 28h2M152 29h3M324 29h3M150 30h2M327 30h2M147 31h3M329 31h3M145 32h2M332 32h2M143 33h2M334 33h2M141 34h2M336 34h2M139 35h2M338 35h2M137 36h2M340 36h2M135 37h2M342 37h2M133 38h2M344 38h2M131 39h2M346 39h2M129 40h2M348 40h2M128 41h1M350 41h1M126 42h2M351 42h2M124 43h2M353 43h2M122 44h2M355 44h2M121 45h1M357 45h1M119 46h2M358 46h2M118 47h1M360 47h1M116 48h2M361 48h2M115 49h1M363 49h1M113 50h2M364 50h2M112 51h1M366 51h1M110 52h2M367 52h2M109 53h1M369 53h1M107 54h2M370 54h2M106 55h1M372 55h1M105 56h1M373 56h1M103 57h2M374 57h2M102 58h1M376 58h1M101 59h1M377 59h1M99 60h2M378 60h2M98 61h1M380 61h1M97 62h1M381 62h1M96 63h1M382 63h1M94 64h2M383 64h2M93 65h1M385 65h1M92 66h1M386 66h1M91 67h1M387 67h1M90 68h1M388 68h1M89 69h1M389 69h1M87 70h2M390 70h2M86 71h1M392 71h1M85 72h1M393 72h1M84 73h1M394 73h1M83 74h1M395 74h1M82 75h1M396 75h1M81 76h1M397 76h1M80 77h1M398 77h1M79 78h1M399 78h1M78 79h1M400 79h1M77 80h1M401 80h1M76 81h1M402 81h1M75 82h1M403 82h1M74 83h1M404 83h1M73 84h1M405 84h1M72 85h1M406 85h1M71 86h1M407 86h1M70 87h1M408 87h1M70 88h1M408 88h1M69 89h1M409 89h1M68 90h1M410 90h1M67 91h1M411 91h1M66 92h1M412 92h1M65 93h1M413 93h1M64 94h1M414 94h1M64 95h1M414 95h1M63 96h1M415 96h1M62 97h1M416 97h1M61 98h1M417 98h1M60 99h1M418 99h1M60 100h1M418 100h1M59 101h1M419 101h1M58 102h1M420 102h1M57 103h1M421 103h1M57 104h1M421 104h1M56 105h1M422 105h1M55 106h1M423 106h1M54 107h1M424 107h1M54 108h1M424 108h1M53 109h1M425 109h1M52 110h1M426 110h1M52 111h1M426 111h1M51 112h1M427 112h1M50 113h1M428 113h1M50 114h1M428 114h1M49 115h1M429 115h1M48 116h1M430 116h1M48 117h1M430 117h1M47 118h1M431 118h1M46 119h1M432 119h1M46 120h1M432 120h1M45 121h1M433 121h1M44 122h1M434 122h1M44 123h1M434 123h1M43 124h1M435 124h1M43 125h1M435 125h1M42 126h1M436 126h1M42 127h1M436 127h1M41 128h1M437 128h1M40 129h1M438 129h1M40 130h1M438 130h1M39 131h1M439 131h1M39 132h1M439 132h1M38 133h1M440 133h1M38 134h1M440 134h1M37 135h1M441 135h1M37 136h1M441 136h1M36 137h1M442 137h1M36 138h1M442 138h1M35 139h1M443 139h1M35 140h1M443 140h1M34 141h1M444 141h1M34 142h1M444 142h1M33 143h1M445 143h1M33 144h1M445 144h1M32 145h1M446 145h1M32 146h1M446 146h1M31 147h1M447 147h1M31 148h1M447 148h1M31 149h1M447 149h1M30 150h1M448 150h1M30 151h1M448 151h1M29 152h1M449 152h1M29 153h1M449 153h1M29 154h1M449 154h1M28 155h1M450 155h1M28 156h1M450 156h1M27 157h1M451 157h1M27 158h1M451 158h1M27 159h1M451 159h1M26 160h1M452 160h1M26 161h1M452 161h1M25 162h1M453 162h1M25 163h1M453 163h1M25 164h1M453 164h1M24 165h1M454 165h1M24 166h1M454 166h1M24 167h1M454 167h1M23 168h1M455 168h1M23 169h1M455 169h1M23 170h1M455 170h1M22 171h1M456 171h1M22 172h1M456 172h1M22 173h1M456 173h1M22 174h1M456 174h1M21 175h1M457 175h1M21 176h1M457 176h1M21 177h1M457 177h1M20 178h1M458 178h1M20 179h1M458 179h1M20 180h1M458 180h1M20 181h1M458 181h1M19 182h1M459 182h1M19 183h1M459 183h1M19 184h1M459 184h1M19 185h1M459 185h1M18 186h1M460 186h1M18 187h1M460 187h1M18 188h1M460 188h1M18 189h1M460 189h1M17 190h1M461 190h1M17 191h1M461 191h1M17 192h1M461 192h1M17 193h1M461 193h1M17 194h1M461 194h1M16 195h1M462 195h1M16 196h1M462 196h1M16 197h1M462 197h1M16 198h1M462 198h1M16 199h1M462 199h1M15 200h1M463 200h1M15 201h1M463 201h1M15 202h1M463 202h1M15 203h1M463 203h1M15 204h1M463 204h1M15 205h1M463 205h1M14 206h1M464 206h1M14 207h1M464 207h1M14 208h1M464 208h1M14 209h1M464 209h1M14 210h1M464 210h1M14 211h1M464 211h1M14 212h1M464 212h1M13 213h1M465 213h1M13 214h1M465 214h1M13 215h1M465 215h1M13 216h1M465 216h1M13 217h1M465 217h1M13 218h1M465 218h1M13 219h1M465 219h1M13 220h1M465 220h1M13 221h1M465 221h1M13 222h1M465 222h1M13 223h1M465 223h1M12 224h1M466 224h1M12 225h1M466 225h1M12 226h1M466 226h1M12 227h1M466 227h1M12 228h1M466 228h1M12 229h1M466 229h1M12 230h1M466 230h1M12 231h1M466 231h1M12 232h1M466 232h1M12 233h1M466 233h1M12 234h1M466 234h1M12 235h1M466 235h1M12 236h1M466 236h1M12 237h1M466 237h1M12 238h1M466 238h1M12 239h1M466 239h1M12 240h1M466 240h1M12 241h1M466 241h1M12 242h1M466 242h1M12 243h1M466 243h1M12 244h1M466 244h1M12 245h1M466 245h1M12 246h1M466 246h1M12 247h1M466 247h1M12 248h1M466 248h1M12 249h1M466 249h1M12 250h1M466 250h1M12 251h1M466 251h1M12 252h1M466 252h1M12 253h1M466 253h1M12 254h1M466 254h1M13 255h1M465 255h1M13 256h1M465 256h1M13 257h1M465 257h1M13 258h1M465 258h1M13 259h1M465 259h1M13 260h1M465 260h1M13 261h1M465 261h1M13 262h1M465 262h1M13 263h1M465 263h1M13 264h1M465 264h1M13 265h1M465 265h1M14 266h1M464 266h1M14 267h1M464 267h1M14 268h1M464 268h1M14 269h1M464 269h1M14 270h1M464 270h1M14 271h1M464 271h1M14 272h1M464 272h1M15 273h1M463 273h1M15 274h1M463 274h1M15 275h1M463 275h1M15 276h1M463 276h1M15 277h1M463 277h1M15 278h1M463 278h1M16 279h1M462 279h1M16 280h1M462 280h1M16 281h1M462 281h1M16 282h1M462 282h1M16 283h1M462 283h1M17 284h1M461 284h1M17 285h1M461 285h1M17 286h1M461 286h1M17 287h1M461 287h1M17 288h1M461 288h1M18 289h1M460 289h1M18 290h1M460 290h1M18 291h1M460 291h1M18 292h1M460 292h1M19 293h1M459 293h1M19 294h1M459 294h1M19 295h1M459 295h1M19 296h1M459 296h1M20 297h1M458 297h1M20 298h1M458 298h1M20 299h1M458 299h1M20 300h1M458 300h1M21 301h1M457 301h1M21 302h1M457 302h1M21 303h1M457 303h1M22 304h1M456 304h1M22 305h1M456 305h1M22 306h1M456 306h1M22 307h1M456 307h1M23 308h1M455 308h1M23 309h1M455 309h1M23 310h1M455 310h1M24 311h1M454 311h1M24 312h1M454 312h1M24 313h1M454 313h1M25 314h1M453 314h1M25 315h1M453 315h1M25 316h1M453 316h1M26 317h1M452 317h1M26 318h1M452 318h1M27 319h1M451 319h1M27 320h1M451 320h1M27 321h1M451 321h1M28 322h1M450 322h1M28 323h1M450 323h1M29 324h1M449 324h1M29 325h1M449 325h1M29 326h1M449 326h1M30 327h1M448 327h1M30 328h1M448 328h1M31 329h1M447 329h1M31 330h1M447 330h1M31 331h1M447 331h1M32 332h1M446 332h1M32 333h1M446 333h1M33 334h1M445 334h1M33 335h1M445 335h1M34 336h1M444 336h1M34 337h1M444 337h1M35 338h1M443 338h1M35 339h1M443 339h1M36 340h1M442 340h1M36 341h1M442 341h1M37 342h1M441 342h1M37 343h1M441 343h1M38 344h1M440 344h1M38 345h1M440 345h1M39 346h1M439 346h1M39 347h1M439 347h1M40 348h1M438 348h1M40 349h1M438 349h1M41 350h1M437 350h1M42 351h1M436 351h1M42 352h1M436 352h1M43 353h1M435 353h1M43 354h1M435 354h1M44 355h1M434 355h1M44 356h1M434 356h1M45 357h1M433 357h1M46 358h1M432 358h1M46 359h1M432 359h1M47 360h1M431 360h1M48 361h1M430 361h1M48 362h1M430 362h1M49 363h1M429 363h1M50 364h1M428 364h1M50 365h1M428 365h1M51 366h1M427 366h1M52 367h1M426 367h1M52 368h1M426 368h1M53 369h1M425 369h1M54 370h1M424 370h1M54 371h1M424 371h1M55 372h1M423 372h1M56 373h1M422 373h1M57 374h1M421 374h1M57 375h1M421 375h1M58 376h1M420 376h1M59 377h1M419 377h1M60 378h1M418 378h1M60 379h1M418 379h1M61 380h1M417 380h1M62 381h1M416 381h1M63 382h1M415 382h1M64 383h1M414 383h1M64 384h1M414 384h1M65 385h1M413 385h1M66 386h1M412 386h1M67 387h1M411 387h1M68 388h1M410 388h1M69 389h1M409 389h1M70 390h1M408 390h1M70 391h1M408 391h1M71 392h1M407 392h1M72 393h1M406 393h1M73 394h1M405 394h1M74 395h1M404 395h1M75 396h1M403 396h1M76 397h1M402 397h1M77 398h1M401 398h1M78 399h1M400 399h1M79 400h1M399 400h1M80 401h1M398 401h1M81 402h1M397 402h1M82 403h1M396 403h1M83 404h1M395 404h1M84 405h1M394 405h1M85 406h1M393 406h1M86 407h1M392 407h1M87 408h2M390 408h2M89 409h1M389 409h1M90 410h1M388 410h1M91 411h1M387 411h1M92 412h1M386 412h1M93 413h1M385 413h1M94 414h2M383 414h2M96 415h1M382 415h1M97 416h1M381 416h1M98 417h1M380 417h1M99 418h2M378 418h2M101 419h1M377 419h1M102 420h1M376 420h1M103 421h2M374 421h2M105 422h1M373 422h1M106 423h1M372 423h1M107 424h2M370 424h2M109 425h1M369 425h1M110 426h2M367 426h2M112 427h1M366 427h1M113 428h2M364 428h2M115 429h1M363 429h1M116 430h2M361 430h2M118 431h1M360 431h1M119 432h2M358 432h2M121 433h1M357 433h1M122 434h2M355 434h2M124 435h2M353 435h2M126 436h2M351 436h2M128 437h1M350 437h1M129 438h2M348 438h2M131 439h2M346 439h2M133 440h2M344 440h2M135 441h2M342 441h2M137 442h2M340 442h2M139 443h2M338 443h2M141 444h2M336 444h2M143 445h2M334 445h2M145 446h2M332 446h2M147 447h3M329 447h3M150 448h2M327 448h2M152 449h3M324 449h3M155 450h2M322 450h2M157 451h3M319 451h3M160 452h2M317 452h2M162 453h3M314 453h3M165 454h3M311 454h3M168 455h3M308 455h3M171 456h4M304 456h4M175 457h3M301 457h3M178 458h4M297 458h4M182 459h4M293 459h4M186 460h4M289 460h4M190 461h5M284 461h5M195 462h5M279 462h5M200 463h6M273 463h6M206 464h7M266 464h7M213 465h11M255 465h11M224 466h31" stroke="#ffffff"/>
<path d="M14 216h6M20 217h11M31 218h12M43 219h6" stroke="#ffffff"/>
<path d="M60 239h24" stroke="#ffffff"/>
<path d="M63 317h2M61 318h2M59 319h2M56 320h3M54 321h2M52 322h2M50 323h2M47 324h3M45 325h2M43 326h2M40 327h3M38 328h2M36 329h2M34 330h2M32 331h2" stroke="#ffffff"/>
<path d="M115 333h1M114 334h1M112 335h2M111 336h1M110 337h1M108 338h2M107 339h1M106 340h1M105 341h1M103 342h2M102 343h1M101 344h1M99 345h2M98 346h1M97 347h1" stroke="#ffffff"/>
<path d="M239 239h1M237 241h1M235 242h1M233 244h1M231 245h1M229 247h1M227 248h1M225 250h1M223 251h1M221 253h1M219 254h1M217 256h1M215 257h1M213 259h1M211 260h1M209 262h1M207 263h1M205 265h1M203 266h1M201 268h1M199 269h1M197 271h1M195 272h1M193 274h1M191 275h1M189 277h1M187 278h1M185 280h1M183 281h1M181 283h1M179 284h1M177 286h1M175 287h1M173 289h1M171 290h1M169 292h1M167 293h1M165 295h1M163 296h1M161 298h1M159 299h1M157 301h1M155 303h1M153 304h1M151 306h1M149 307h1M147 309h1M145 310h1M143 312h1M141 313h1M139 315h1M137 316h1M135 318h1M133 319h1M131 321h1M129 322h1M127 324h1M125 325h1M123 327h1M121 328h1M119 330h1M117 331h1" stroke="#7f7f7f"/>
<path d="M127 394h1M126 395h1M125 396h1M125 397h1M124 398h1M123 399h1M122 400h1M122 401h1M121 402h1M120 403h1M119 404h1M119 405h1M118 406h1M117 407h1M116 408h1M116 409h1M115 410h1M114 411h1M113 412h1M113 413h1M112 414h1M111 415h1M110 416h1M110 417h1M109 418h1M108 419h1M107 420h1M107 421h1M106 422h1" stroke="#ffffff"/>
<path d="M172 379h1M172 380h1M171 381h1M171 382h1M170 383h1M170 384h1M169 385h1M169 386h1M168 387h1M168 388h1M167 389h1M167 390h1M166 391h1M166 392h1M165 393h1M165 394h1M164 395h1M164 396h1M163 397h1M163 398h1M162 399h1M162 400h1" stroke="#ffffff"/>
<path d="M239 239h1M238 241h1M237 243h1M236 245h1M235 247h1M234 249h1M233 251h1M232 253h1M231 255h1M230 257h1M229 259h1M228 261h1M228 263h1M227 265h1M226 267h1M225 269h1M224 271h1M223 273h1M222 275h1M221 277h1M220 279h1M219 281h1M218 283h1M217 285h1M216 287h1M215 289h1M214 291h1M213 293h1M212 295h1M211 297h1M210 299h1M209 301h1M208 303h1M207 305h1M206 307h1M205 309h1M205 311h1M204 313h1M203 315h1M202 317h1M201 319h1M200 321h1M199 323h1M198 325h1M197 327h1M196 329h1M195 331h1M194 333h1M193 335h1M192 337h1M191 339h1M190 341h1M189 343h1M188 345h1M187 347h1M186 349h1M185 351h1M184 353h1M183 355h1M183 357h1M182 359h1M181 361h1M180 363h1M179 365h1M178 367h1M177 369h1M176 371h1M175 373h1M174 375h1M173 377h1M172 379h1" stroke="#7f7f7f"/>
<path d="M219 430h1M219 431h1M219 432h1M219 433h1M219 434h1M219 435h1M218 436h1M218 437h1M218 438h1M218 439h1M218 440h1M218 441h1M218 442h1M218 443h1M218 444h1M218 445h1M218 446h1M217 447h1M217 448h1M217 449h1M217 450h1M217 451h1M217 452h1M217 453h1M217 454h1M217 455h1M217 456h1M217 457h1M217 458h1M216 459h1M216 460h1M216 461h1M216 462h1M216 463h1M216 464h1" stroke="#ffffff"/>
<path d="M233 395h1M233 396h1M233 397h1M233 398h1M233 399h1M233 400h1M233 401h1M233 402h1M233 403h1M233 404h1M233 405h1M233 406h1M232 407h1M232 408h1M232 409h1M232 410h1M232 411h1M232 412h1M232 413h1M232 414h1M232 415h1M232 416h1M232 417h1M232 418h1" stroke="#ffffff"/>
<path d="M317 414h1M317 415h1M318 416h1M318 417h1M319 418h1M319 419h1M320 420h1M320 421h1M321 422h1M321 423h1M321 424h1M322 425h1M322 426h1M323 427h1M323 428h1M324 429h1M324 430h1M324 431h1M325 432h1M325 433h1M326 434h1M326 435h1M327 436h1M327 437h1M328 438h1M328 439h1M328 440h1M329 441h1M329 442h1M330 443h1M330 444h1M331 445h1M331 446h1" stroke="#ffffff"/>
<path d="M296 384h1M296 385h1M297 386h1M297 387h1M298 388h1M298 389h1M298 390h1M299 391h1M299 392h1M299 393h1M300 394h1M300 395h1M301 396h1M301 397h1M301 398h1M302 399h1M302 400h1M302 401h1M303 402h1M303 403h1M304 404h1M304 405h1" stroke="#ffffff"/>
<path d="M239 239h1M240 241h1M241 243h1M241 245h1M242 247h1M243 249h1M244 251h1M245 253h1M245 255h1M246 257h1M247 259h1M248 261h1M249 263h1M249 265h1M250 267h1M251 269h1M252 271h1M252 273h1M253 275h1M254 277h1M255 279h1M256 281h1M256 283h1M257 285h1M258 287h1M259 289h1M260 291h1M260 293h1M261 295h1M262 297h1M263 299h1M264 301h1M264 303h1M265 305h1M266 307h1M267 309h1M268 311h1M268 313h1M269 315h1M270 317h1M271 319h1M271 321h1M272 323h1M273 325h1M274 327h1M275 329h1M275 331h1M276 333h1M277 335h1M278 337h1M279 339h1M279 341h1M280 343h1M281 345h1M282 347h1M283 349h1M283 351h1M284 353h1M285 355h1M286 357h1M287 359h1M287 361h1M288 363h1M289 365h1M290 367h1M290 369h1M291 371h1M292 373h1M293 375h1M294 377h1M294 379h1M295 381h1M296 383h1" stroke="#7f7f7f"/>
<path d="M394 351h1M395 352h1M396 353h2M398 354h1M399 355h1M400 356h2M402 357h1M403 358h1M404 359h2M406 360h1M407 361h1M408 362h2M410 363h1M411 364h1M412 365h2M414 366h1M415 367h1M416 368h2M418 369h1M419 370h1M420 371h2M422 372h1" stroke="#ffffff"/>
<path d="M359 338h1M360 339h1M361 340h2M363 341h1M364 342h1M365 343h2M367 344h1M368 345h1M369 346h1M370 347h2M372 348h1M373 349h1M374 350h2M376 351h1M377 352h1" stroke="#ffffff"/>
<path d="M239 239h1M241 241h1M243 242h1M245 244h1M247 246h1M249 247h1M251 249h1M253 250h1M255 252h1M257 254h1M259 255h1M261 257h1M263 259h1M265 260h1M267 262h1M269 264h1M271 265h1M273 267h1M275 268h1M277 270h1M279 272h1M281 273h1M283 275h1M285 277h1M287 278h1M289 280h1M291 281h1M293 283h1M295 285h1M297 286h1M299 288h1M301 290h1M303 291h1M305 293h1M307 295h1M309 296h1M311 298h1M313 299h1M315 301h1M317 303h1M319 304h1M321 306h1M323 308h1M325 309h1M327 311h1M329 313h1M331 314h1M333 316h1M335 317h1M337 319h1M339 321h1M341 322h1M343 324h1M345 326h1M347 327h1M349 329h1M351 330h1M353 332h1M355 334h1M357 335h1M359 337h1" stroke="#7f7f7f"/>
<path d="M430 259h6M436 260h11M447 261h12M459 262h6" stroke="#ffffff"/>
<path d="M395 239h24" stroke="#ffffff"/>
<path d="M445 147h2M443 148h2M441 149h2M438 150h3M436 151h2M434 152h2M432 153h2M429 154h3M427 155h2M425 156h2M422 157h3M420 158h2M418 159h2M416 160h2M414 161h2" stroke="#ffffff"/>
<path d="M381 131h1M380 132h1M378 133h2M377 134h1M376 135h1M374 136h2M373 137h1M372 138h1M371 139h1M369 140h2M368 141h1M367 142h1M365 143h2M364 144h1M363 145h1" stroke="#ffffff"/>
<path d="M361 147h1M359 148h1M357 150h1M355 151h1M353 153h1M351 154h1M349 156h1M347 157h1M345 159h1M343 160h1M341 162h1M339 163h1M337 165h1M335 166h1M333 168h1M331 169h1M329 171h1M327 172h1M325 174h1M323 175h1M321 177h1M319 179h1M317 180h1M315 182h1M313 183h1M311 185h1M309 186h1M307 188h1M305 189h1M303 191h1M301 192h1M299 194h1M297 195h1M295 197h1M293 198h1M291 200h1M289 201h1M287 203h1M285 204h1M283 206h1M281 207h1M279 209h1M277 210h1M275 212h1M273 213h1M271 215h1M269 216h1M267 218h1M265 219h1M263 221h1M261 222h1M259 224h1M257 225h1M255 227h1M253 228h1M251 230h1M249 231h1M247 233h1M245 234h1M243 236h1M241 237h1M239 239h1" stroke="#7f7f7f"/>
<path d="M372 56h1M371 57h1M370 58h1M370 59h1M369 60h1M368 61h1M367 62h1M367 63h1M366 64h1M365 65h1M364 66h1M364 67h1M363 68h1M362 69h1M361 70h1M361 71h1M360 72h1M359 73h1M358 74h1M358 75h1M357 76h1M356 77h1M355 78h1M355 79h1M354 80h1M353 81h1M352 82h1M352 83h1M351 84h1" stroke="#ffffff"/>
<path d="M316 78h1M316 79h1M315 80h1M315 81h1M314 82h1M314 83h1M313 84h1M313 85h1M312 86h1M312 87h1M311 88h1M311 89h1M310 90h1M310 91h1M309 92h1M309 93h1M308 94h1M308 95h1M307 96h1M307 97h1M306 98h1M306 99h1" stroke="#ffffff"/>
<path d="M306 99h1M305 101h1M304 103h1M303 105h1M302 107h1M301 109h1M300 111h1M299 113h1M298 115h1M297 117h1M296 119h1M295 121h1M295 123h1M294 125h1M293 127h1M292 129h1M291 131h1M290 133h1M289 135h1M288 137h1M287 139h1M286 141h1M285 143h1M284 145h1M283 147h1M282 149h1M281 151h1M280 153h1M279 155h1M278 157h1M277 159h1M276 161h1M275 163h1M274 165h1M273 167h1M272 169h1M272 171h1M271 173h1M270 175h1M269 177h1M268 179h1M267 181h1M266 183h1M265 185h1M264 187h1M263 189h1M262 191h1M261 193h1M260 195h1M259 197h1M258 199h1M257 201h1M256 203h1M255 205h1M254 207h1M253 209h1M252 211h1M251 213h1M250 215h1M250 217h1M249 219h1M248 221h1M247 223h1M246 225h1M245 227h1M244 229h1M243 231h1M242 233h1M241 235h1M240 237h1M239 239h1" stroke="#7f7f7f"/>
<path d="M262 14h1M262 15h1M262 16h1M262 17h1M262 18h1M262 19h1M261 20h1M261 21h1M261 22h1M261 23h1M261 24h1M261 25h1M261 26h1M261 27h1M261 28h1M261 29h1M261 30h1M260 31h1M260 32h1M260 33h1M260 34h1M260 35h1M260 36h1M260 37h1M260 38h1M260 39h1M260 40h1M260 41h1M260 42h1M259 43h1M259 44h1M259 45h1M259 46h1M259 47h1M259 48h1" stroke="#ffffff"/>
<path d="M246 60h1M246 61h1M246 62h1M246 63h1M246 64h1M246 65h1M246 66h1M246 67h1M246 68h1M246 69h1M246 70h1M246 71h1M245 72h1M245 73h1M245 74h1M245 75h1M245 76h1M245 77h1M245 78h1M245 79h1M245 80h1M245 81h1M245 82h1M245 83h1" stroke="#ffffff"/>
<path d="M147 32h1M147 33h1M148 34h1M148 35h1M149 36h1M149 37h1M150 38h1M150 39h1M151 40h1M151 41h1M151 42h1M152 43h1M152 44h1M153 45h1M153 46h1M154 47h1M154 48h1M154 49h1M155 50h1M155 51h1M156 52h1M156 53h1M157 54h1M157 55h1M158 56h1M158 57h1M158 58h1M159 59h1M159 60h1M160 61h1M160 62h1M161 63h1M161 64h1" stroke="#ffffff"/>
<path d="M174 73h1M174 74h1M175 75h1M175 76h1M176 77h1M176 78h1M176 79h1M177 80h1M177 81h1M177 82h1M178 83h1M178 84h1M179 85h1M179 86h1M179 87h1M180 88h1M180 89h1M180 90h1M181 91h1M181 92h1M182 93h1M182 94h1" stroke="#ffffff"/>
<path d="M182 95h1M183 97h1M184 99h1M184 101h1M185 103h1M186 105h1M187 107h1M188 109h1M188 111h1M189 113h1M190 115h1M191 117h1M192 119h1M192 121h1M193 123h1M194 125h1M195 127h1M195 129h1M196 131h1M197 133h1M198 135h1M199 137h1M199 139h1M200 141h1M201 143h1M202 145h1M203 147h1M203 149h1M204 151h1M205 153h1M206 155h1M207 157h1M207 159h1M208 161h1M209 163h1M210 165h1M211 167h1M211 169h1M212 171h1M213 173h1M214 175h1M214 177h1M215 179h1M216 181h1M217 183h1M218 185h1M218 187h1M219 189h1M220 191h1M221 193h1M222 195h1M222 197h1M223 199h1M224 201h1M225 203h1M226 205h1M226 207h1M227 209h1M228 211h1M229 213h1M230 215h1M230 217h1M231 219h1M232 221h1M233 223h1M233 225h1M234 227h1M235 229h1M236 231h1M237 233h1M237 235h1M238 237h1M239 239h1" stroke="#7f7f7f"/>
<path d="M56 106h1M57 107h1M58 108h2M60 109h1M61 110h1M62 111h2M64 112h1M65 113h1M66 114h2M68 115h1M69 116h1M70 117h2M72 118h1M73 119h1M74 120h2M76 121h1M77 122h1M78 123h2M80 124h1M81 125h1M82 126h2M84 127h1" stroke="#ffffff"/>
<path d="M101 126h1M102 127h1M103 128h2M105 129h1M106 130h1M107 131h2M109 132h1M110 133h1M111 134h1M112 135h2M114 136h1M115 137h1M116 138h2M118 139h1M119 140h1" stroke="#ffffff"/>
<path d="M119 141h1M121 143h1M123 144h1M125 146h1M127 148h1M129 149h1M131 151h1M133 152h1M135 154h1M137 156h1M139 157h1M141 159h1M143 161h1M145 162h1M147 164h1M149 166h1M151 167h1M153 169h1M155 170h1M157 172h1M159 174h1M161 175h1M163 177h1M165 179h1M167 180h1M169 182h1M171 183h1M173 185h1M175 187h1M177 188h1M179 190h1M181 192h1M183 193h1M185 195h1M187 197h1M189 198h1M191 200h1M193 201h1M195 203h1M197 205h1M199 206h1M201 208h1M203 210h1M205 211h1M207 213h1M209 215h1M211 216h1M213 218h1M215 219h1M217 221h1M219 223h1M221 224h1M223 226h1M225 228h1M227 229h1M229 231h1M231 232h1M233 234h1M235 236h1M237 237h1M239 239h1" stroke="#7f7f7f"/>
<path d="M26 263h3M36 263h3M25 264h1M29 264h1M35 264h1M39 264h1M24 265h1M30 265h1M34 265h1M40 265h1M24 266h1M30 266h1M34 266h1M40 266h1M24 267h1M30 267h1M34 267h1M40 267h1M25 268h1M31 268h1M33 268h1M39 268h1M26 269h1M31 269h1M33 269h1M38 269h1M31 270h1M33 270h1M31 271h1M33 271h1M32 272h1M32 273h1M32 274h1M32 275h1M32 276h1M32 277h1M32 278h1M32 279h1" stroke="#ff0000"/>
<path d="M31 240h3M32 241h2M31 242h1M33 242h1M27 243h2M30 243h1M26 244h1M29 244h1M25 245h1M30 245h1M25 246h1M30 246h1M26 247h1M29 247h1M27 248h2" stroke="#ff0000"/>
<path d="M75 262h3M76 263h2M75 264h1M77 264h1M71 265h2M74 265h1M70 266h1M73 266h1M69 267h1M74 267h1M69 268h1M74 268h1M70 269h1M73 269h1M71 270h2" stroke="#ff0000"/>
<path d="M70 363h1M82 363h1M71 364h1M81 364h1M71 365h1M81 365h1M72 366h2M79 366h2M74 367h5M72 368h2M79 368h2M71 369h1M81 369h1M71 370h1M81 370h1M70 371h1M82 371h1M70 372h1M82 372h1M70 373h1M82 373h1M70 374h1M82 374h1M70 375h1M82 375h1M71 376h1M81 376h1M71 377h1M81 377h1M72 378h2M79 378h2M74 379h5" stroke="#ffff00"/>
<path d="M59 344h3M58 345h1M62 345h1M58 346h1M62 346h1M58 347h1M62 347h1M59 348h3M60 349h1M58 350h5M60 351h1M60 352h1" stroke="#ffff00"/>
<path d="M117 351h3M116 352h1M120 352h1M116 353h1M120 353h1M116 354h1M120 354h1M117 355h3M118 356h1M116 357h5M118 358h1M118 359h1" stroke="#ffff00"/>
<path d="M158 427h1M172 427h1M159 428h1M171 428h1M160 429h11M162 430h1M168 430h1M162 431h1M168 431h1M162 432h1M168 432h1M162 433h1M168 433h1M162 434h1M168 434h1M162 435h1M168 435h1M162 436h1M168 436h1M162 437h1M168 437h1M162 438h1M168 438h1M162 439h1M168 439h1M162 440h1M168 440h1M160 441h11M159 442h1M171 442h1M158 443h1M172 443h1" stroke="#00ff00"/>
<path d="M137 419h1M141 419h1M138 420h3M137 421h1M141 421h1M137 422h1M141 422h1M137 423h1M141 423h1M138 424h3M139 425h1M137 426h5M139 427h1" stroke="#00ff00"/>
<path d="M181 393h1M185 393h1M182 394h3M181 395h1M185 395h1M181 396h1M185 396h1M181 397h1M185 397h1M182 398h3M183 399h1M181 400h5M183 401h1" stroke="#00ff00"/>
<path d="M269 439h5M266 440h3M274 440h1M265 441h1M275 441h3M264 442h1M274 442h1M278 442h1M263 443h1M273 443h1M279 443h1M273 444h1M279 444h1M265 445h3M273 445h1M279 445h1M264 446h1M268 446h1M274 446h1M278 446h1M263 447h1M269 447h1M275 447h3M263 448h1M269 448h1M263 449h1M269 449h1M279 449h1M264 450h1M268 450h1M278 450h1M265 451h3M277 451h1M268 452h1M274 452h3M269 453h5" stroke="#00ffff"/>
<path d="M242 445h3M241 446h1M245 446h2M242 447h1M246 447h1M243 448h1M247 448h1M243 449h1M247 449h1M243 450h1M247 450h1M242 451h1M246 451h1M241 452h1M245 452h2M242 453h3" stroke="#00ffff"/>
<path d="M247 402h3M246 403h1M250 403h2M247 404h1M251 404h1M248 405h1M252 405h1M248 406h1M252 406h1M248 407h1M252 407h1M247 408h1M251 408h1M246 409h1M250 409h2M247 410h3" stroke="#00ffff"/>
<path d="M369 394h5M368 395h1M374 395h1M367 396h1M375 396h1M366 397h1M376 397h1M365 398h1M377 398h1M365 399h1M377 399h1M365 400h1M377 400h1M365 401h1M377 401h1M365 402h1M377 402h1M366 403h1M376 403h1M367 404h1M375 404h1M367 405h1M375 405h1M363 406h1M367 406h1M375 406h1M364 407h1M366 407h1M376 407h1M365 408h1M377 408h1M378 409h1M379 410h1" stroke="#ff0000"/>
<path d="M347 414h3M345 415h2M350 415h2M345 416h1M351 416h1M344 417h1M352 417h1M344 418h1M348 418h1M352 418h1M344 419h1M352 419h1M345 420h1M351 420h1M345 421h2M350 421h2M347 422h3" stroke="#ff0000"/>
<path d="M319 382h3M317 383h2M322 383h2M317 384h1M323 384h1M316 385h1M324 385h1M316 386h1M320 386h1M324 386h1M316 387h1M324 387h1M317 388h1M323 388h1M317 389h2M322 389h2M319 390h3" stroke="#ff0000"/>
<path d="M427 306h1M431 306h1M435 306h1M428 307h1M430 307h1M432 307h1M434 307h1M436 307h1M429 308h1M433 308h1M437 308h1M441 308h1M429 309h1M433 309h1M437 309h1M440 309h2M429 310h1M433 310h1M437 310h1M439 310h1M441 310h1M429 311h1M433 311h1M437 311h2M441 311h1M429 312h1M433 312h1M437 312h1M441 312h1M429 313h1M433 313h1M437 313h1M441 313h1M429 314h1M433 314h1M437 314h1M441 314h1M429 315h1M433 315h1M437 315h1M441 315h1M429 316h1M433 316h1M437 316h1M441 316h1M429 317h1M433 317h1M437 317h1M441 317h1M429 318h1M433 318h1M437 318h1M441 318h1M429 319h1M433 319h1M438 319h1M440 319h1M429 320h1M433 320h1M439 320h1M438 321h1M440 321h1M437 322h1M441 322h1" stroke="#ffff00"/>
<path d="M421 335h1M425 335h1M422 336h3M421 337h1M425 337h1M421 338h1M425 338h1M421 339h1M425 339h1M422 340h3M423 341h1M421 342h5M423 343h1" stroke="#00ff00"/>
<path d="M383 317h1M387 317h1M384 318h3M383 319h1M387 319h1M383 320h1M387 320h1M383 321h1M387 321h1M384 322h3M385 323h1M383 324h5M385 325h1" stroke="#00ff00"/>
<path d="M444 203h5M443 204h1M449 204h1M442 205h1M450 205h1M442 206h1M450 206h1M442 207h1M450 207h1M443 208h1M449 208h1M438 209h7M448 209h7M438 213h17" stroke="#00ff00"/>
<path d="M448 230h3M447 231h1M451 231h1M447 232h1M451 232h1M447 233h1M451 233h1M448 234h3M449 235h1M447 236h5M449 237h1M449 238h1" stroke="#ffff00"/>
<path d="M404 208h3M403 209h1M407 209h1M403 210h1M407 210h1M403 211h1M407 211h1M404 212h3M405 213h1M403 214h5M405 215h1M405 216h1" stroke="#ffff00"/>
<path d="M394 99h1M398 99h1M402 99h1M395 100h1M397 100h1M399 100h1M401 100h1M403 100h1M396 101h1M400 101h1M404 101h1M396 102h1M400 102h1M404 102h1M396 103h1M400 103h1M404 103h1M396 104h1M400 104h1M404 104h1M396 105h1M400 105h1M404 105h1M396 106h1M400 106h1M404 106h1M396 107h1M400 107h1M404 107h1M396 108h1M400 108h1M404 108h1M396 109h1M400 109h1M404 109h1M396 110h1M400 110h1M404 110h1M409 110h1M396 111h1M400 111h1M404 111h1M408 111h3M396 112h1M400 112h1M404 112h1M409 112h1M396 113h1M400 113h1M404 113h1M409 113h1M405 114h1M408 114h1M406 115h2" stroke="#00ffff"/>
<path d="M415 126h6M415 127h1M421 127h1M415 128h1M421 128h1M415 129h1M421 129h1M415 130h6M415 131h1M415 132h1M415 133h1M415 134h6" stroke="#00ffff"/>
<path d="M357 119h6M357 120h1M363 120h1M357 121h1M363 121h1M357 122h1M363 122h1M357 123h6M357 124h1M357 125h1M357 126h1M357 127h6" stroke="#00ffff"/>
<path d="M318 35h5M321 36h2M320 37h1M322 37h1M319 38h1M322 38h1M318 39h1M322 39h1M317 40h1M308 41h1M316 41h1M309 42h1M315 42h1M310 43h1M314 43h1M311 44h1M313 44h1M312 45h1M311 46h1M313 46h1M310 47h1M314 47h1M309 48h1M315 48h1M308 49h1M316 49h1M307 50h1M306 51h1" stroke="#ff0000"/>
<path d="M342 51h1M336 52h2M341 52h1M338 53h1M341 53h1M338 54h1M341 54h1M337 55h1M341 55h1M337 56h1M341 56h1M336 57h1M341 57h1M336 58h8M341 59h1" stroke="#ff0000"/>
<path d="M298 77h1M292 78h2M297 78h1M294 79h1M297 79h1M294 80h1M297 80h1M293 81h1M297 81h1M293 82h1M297 82h1M292 83h1M297 83h1M292 84h8M297 85h1" stroke="#ff0000"/>
<path d="M199 24h3M209 24h7M202 25h1M208 25h1M214 25h1M203 26h5M213 26h1M212 27h1M211 28h1M210 29h1M209 30h1M209 31h1M207 32h7M206 33h1M208 33h2M214 33h1M205 34h1M207 34h1M209 34h1M215 34h1M204 35h1M207 35h1M215 35h1M203 36h1M207 36h1M215 36h1M203 37h1M207 37h1M215 37h1M203 38h1M207 38h1M215 38h1M202 39h1M208 39h1M214 39h1M201 40h1M209 40h5" stroke="#ffff00"/>
<path d="M233 25h1M231 26h5M233 27h1M233 28h1M235 28h2M233 29h2M237 29h1M233 30h1M237 30h1M233 31h1M236 31h1M233 32h1M236 32h1M237 33h1" stroke="#ffff00"/>
<path d="M228 68h1M226 69h5M228 70h1M228 71h1M230 71h2M228 72h2M232 72h1M228 73h1M232 73h1M228 74h1M231 74h1M228 75h1M231 75h1M232 76h1" stroke="#ffff00"/>
<path d="M103 68h1M109 68h1M115 68h1M102 69h2M108 69h2M114 69h1M102 70h1M104 70h1M108 70h1M110 70h1M114 70h1M101 71h1M104 71h1M107 71h1M110 71h1M113 71h1M100 72h1M104 72h1M106 72h1M110 72h1M112 72h1M100 73h1M105 73h2M111 73h2M99 74h1M105 74h1M111 74h1M103 78h1M109 78h1M115 78h1M102 79h2M108 79h2M114 79h1M102 80h1M104 80h1M108 80h1M110 80h1M114 80h1M101 81h1M104 81h1M107 81h1M110 81h1M113 81h1M100 82h1M104 82h1M106 82h1M110 82h1M112 82h1M100 83h1M105 83h2M111 83h2M99 84h1M105 84h1M111 84h1" stroke="#00ff00"/>
<path d="M130 56h1M129 57h3M128 58h1M130 58h1M132 58h1M130 59h1M129 60h3M128 61h1M132 61h1M128 62h1M130 62h1M132 62h1M128 63h1M132 63h1M129 64h3" stroke="#00ff00"/>
<path d="M158 88h1M157 89h3M156 90h1M158 90h1M160 90h1M158 91h1M157 92h3M156 93h1M160 93h1M156 94h1M158 94h1M160 94h1M156 95h1M160 95h1M157 96h3" stroke="#00ff00"/>
<path d="M35 156h1M51 156h1M36 157h1M50 157h1M37 158h1M49 158h1M38 159h1M48 159h1M38 160h1M48 160h1M39 161h1M47 161h1M39 162h1M47 162h1M39 163h1M47 163h1M35 164h17M39 165h1M47 165h1M39 166h1M47 166h1M39 167h1M47 167h1M38 168h1M48 168h1M38 169h1M48 169h1M37 170h1M49 170h1M36 171h1M50 171h1M35 172h1M51 172h1" stroke="#00ffff"/>
<path d="M52 135h1M55 135h1M58 135h1M51 136h2M54 136h3M58 136h2M52 137h1M55 137h1M58 137h1M53 138h1M55 138h1M57 138h1M54 139h3M55 140h1M53 141h5M55 142h1M55 143h1" stroke="#00ffff"/>
<path d="M90 153h1M93 153h1M96 153h1M89 154h2M92 154h3M96 154h2M90 155h1M93 155h1M96 155h1M91 156h1M93 156h1M95 156h1M92 157h3M93 158h1M91 159h5M93 160h1M93 161h1" stroke="#00ffff"/>
<path d="M233 105h1M234 106h1M235 107h1M236 108h1M237 109h1M238 110h1M239 111h1M240 112h1M241 113h1M242 114h1M243 115h1" stroke="#ffffff"/>
<path d="M243 118h1M242 119h3M243 120h1" stroke="#ffff00"/>
<path d="M105 239h11" stroke="#ffffff"/>
<path d="M119 238h1M118 239h3M119 240h1" stroke="#ff0000"/>
<path d="M170 343h1M169 344h1M169 345h1M168 346h1M167 347h1M167 348h1M166 349h1M166 350h1M165 351h1" stroke="#7f7f7f"/>
<path d="M158 351h5M157 352h1M163 352h1M156 353h1M164 353h1M155 354h1M165 354h1M154 355h1M166 355h1M154 356h1M166 356h1M154 357h1M166 357h1M154 358h1M166 358h1M154 359h1M166 359h1M155 360h1M165 360h1M156 361h1M164 361h1M156 362h1M164 362h1M154 363h3M164 363h3M153 364h1M156 364h1M164 364h1M167 364h1M152 365h1M156 365h1M164 365h1M168 365h1M153 366h1M155 366h1M165 366h1M167 366h1M154 367h1M166 367h1" stroke="#007f7f"/>
<path d="M173 338h1M172 339h3M173 340h1" stroke="#007f7f"/>
<path d="M361 185h2M359 186h2M357 187h2M355 188h2M353 189h2" stroke="#ffffff"/>
<path d="M365 173h11M365 174h1M376 174h1M365 175h1M377 175h1M365 176h1M377 176h1M365 177h1M377 177h1M365 178h1M377 178h1M365 179h1M377 179h1M365 180h1M376 180h1M365 181h11M365 182h1M365 183h1M365 184h1M365 185h1M365 186h1M365 187h1M365 188h1M365 189h11" stroke="#00ffff"/>
<path d="M349 190h1M348 191h3M349 192h1" stroke="#00ffff"/>
<path d="M267 108h2M265 109h2M263 110h2M261 111h2M259 112h2M257 113h2M255 114h2M254 115h1" stroke="#7f7f7f"/>
<path d="M263 91h1M269 91h1M275 91h1M263 92h1M269 92h1M275 92h1M262 93h3M267 93h5M274 93h3M263 94h1M269 94h1M275 94h1M263 95h1M269 95h1M275 95h1M264 96h1M269 96h1M274 96h1M264 97h1M269 97h1M274 97h1M265 98h2M269 98h1M272 98h2M267 99h5M269 100h1M269 101h1M269 102h1M265 103h9M269 104h1M269 105h1M269 106h1M269 107h1" stroke="#00ffff"/>
<path d="M254 119h1M253 120h3M254 121h1" stroke="#00ffff"/>
<path d="M298 119h1M298 120h1M297 121h1M297 122h1M296 123h1M296 124h1M295 125h1M295 126h1M294 127h1M294 128h1" stroke="#7f7f7f"/>
<path d="M303 102h1M302 103h3M301 104h1M303 104h1M305 104h1M300 105h1M303 105h1M306 105h1M299 106h1M303 106h1M307 106h1M303 107h1M303 108h1M303 109h1M301 110h5M300 111h1M306 111h1M299 112h1M307 112h1M299 113h1M307 113h1M299 114h1M303 114h1M307 114h1M299 115h1M307 115h1M299 116h1M307 116h1M300 117h1M306 117h1M301 118h5" stroke="#00ff00"/>
<path d="M292 131h1M291 132h3M292 133h1" stroke="#00ff00"/>
<path d="M349 163h1M347 164h2M345 165h2M344 166h1M342 167h2M341 168h1" stroke="#ffffff"/>
<path d="M355 150h1M355 151h1M351 152h9M355 153h1M355 154h1M355 155h1M355 156h1M359 156h3M355 157h1M358 157h1M362 157h1M355 158h3M363 158h1M355 159h1M363 159h1M355 160h1M363 160h1M355 161h1M362 161h1M355 162h1M361 162h1M355 163h1M361 163h1M355 164h1M361 164h1M362 165h1M363 166h1" stroke="#ffff00"/>
<path d="M337 170h1M336 171h3M337 172h1" stroke="#ffff00"/>
<path d="M249 105h1M248 106h1M248 107h1M247 108h1M247 109h1M246 110h1M246 111h1M245 112h1M245 113h1M244 114h1M244 115h1" stroke="#7f7f7f"/>
<path d="M256 88h1M255 89h1M244 90h3M254 90h1M247 91h1M254 91h1M248 92h1M254 92h1M248 93h1M254 93h1M248 94h1M254 94h1M247 95h1M254 95h1M246 96h1M254 96h1M246 97h1M254 97h1M246 98h1M254 98h1M245 99h1M254 99h1M244 100h1M254 100h1M244 101h1M254 101h1M244 102h15M254 103h1M254 104h1" stroke="#ff0000"/>
<path d="M244 118h1M243 119h3M244 120h1" stroke="#ff0000"/>
<path d="M319 132h1M318 133h1M317 134h1M316 135h1M316 136h1M315 137h1M314 138h1M313 139h1" stroke="#ffffff"/>
<path d="M329 116h5M332 117h2M331 118h1M333 118h1M330 119h1M333 119h1M329 120h1M333 120h1M328 121h1M321 122h3M327 122h1M320 123h1M324 123h1M326 123h1M319 124h1M325 124h1M318 125h1M326 125h1M317 126h1M327 126h1M317 127h1M327 127h1M317 128h1M327 128h1M318 129h1M326 129h1M319 130h1M325 130h1M320 131h1M324 131h1M321 132h3" stroke="#ff0000"/>
<path d="M310 142h1M309 143h3M310 144h1" stroke="#ff0000"/>
<path d="M352 292h1M353 293h1M354 294h1M355 295h1M355 296h1M356 297h1M357 298h1M358 299h1" stroke="#ffffff"/>
<path d="M365 296h5M364 297h1M370 297h1M363 298h1M371 298h1M363 299h1M371 299h1M363 300h1M371 300h1M363 301h1M371 301h1M363 302h1M371 302h1M364 303h1M370 303h1M365 304h5M367 305h1M367 306h1M367 307h1M363 308h9M367 309h1M367 310h1M367 311h1M367 312h1" stroke="#ffff00"/>
<path d="M347 289h1M346 290h3M347 291h1" stroke="#ffff00"/>
<path d="M365 283h2M362 284h3M359 285h3M356 286h3M354 287h2" stroke="#7f7f7f"/>
<path d="M371 278h1M379 278h1M372 279h1M378 279h1M373 280h5M372 281h1M378 281h1M371 282h1M379 282h1M371 283h1M379 283h1M371 284h1M379 284h1M371 285h1M379 285h1M371 286h1M379 286h1M372 287h1M378 287h1M373 288h5M375 289h1M375 290h1M375 291h1M371 292h9M375 293h1M375 294h1" stroke="#00ff00"/>
<path d="M349 284h1M348 285h3M349 286h1" stroke="#00ff00"/>
<path d="M115 263h3M111 264h4M108 265h3" stroke="#ffffff"/>
<path d="M94 259h5M93 260h1M99 260h2M92 261h1M101 261h1M93 262h1M102 262h1M94 263h1M103 263h1M95 264h1M103 264h1M95 265h1M104 265h1M96 266h1M104 266h1M96 267h1M104 267h1M96 268h1M104 268h1M95 269h1M104 269h1M95 270h1M103 270h1M94 271h1M103 271h1M93 272h1M102 272h1M92 273h1M101 273h1M93 274h1M99 274h2M94 275h5" stroke="#00ffff"/>
<path d="M122 261h1M121 262h3M122 263h1" stroke="#00ffff"/>
<path d="M331 322h1M332 323h1M333 324h1M334 325h1M335 326h1M336 327h1M337 328h1M338 329h1" stroke="#ffffff"/>
<path d="M345 335h1" stroke="#ff0000"/>
<path d="M343 327h5M341 328h2M348 328h2M340 329h1M350 329h1M339 330h1M351 330h1M338 331h1M352 331h1M338 332h1M352 332h1M337 333h1M353 333h1M337 334h1M353 334h1M337 335h1M353 335h1M337 336h1M353 336h1M337 337h1M353 337h1M338 338h1M352 338h1M338 339h1M352 339h1M339 340h1M351 340h1M340 341h1M350 341h1M341 342h2M348 342h2M343 343h5" stroke="#ff0000"/>
<path d="M328 318h1M327 319h3M328 320h1" stroke="#ff0000"/>
<path d="M242 125h1M240 127h1M238 129h1M236 131h1M234 133h1M232 135h1M230 137h1M228 138h1M226 140h1M224 142h1M222 144h1M220 146h1M218 148h1M216 150h1M214 152h1M212 154h1M210 156h1M208 158h1M206 160h1M204 162h1M202 164h1M200 166h1M198 167h1M196 169h1M194 171h1M192 173h1M190 175h1M188 177h1M186 179h1M184 181h1M182 183h1M180 185h1M178 187h1M176 189h1M174 191h1M172 193h1M170 195h1M168 196h1M166 198h1M164 200h1M162 202h1M160 204h1M158 206h1M156 208h1M154 210h1M152 212h1M150 214h1M148 216h1M146 218h1M144 220h1M142 222h1M140 224h1M138 225h1M136 227h1M134 229h1M132 231h1M130 233h1M128 235h1M126 237h1M124 239h1" stroke="#ff0000"/>
<path d="M290 136h1M287 138h1M284 140h1M281 142h1M278 143h1M275 145h1M272 147h1M269 149h1M266 151h1M263 153h1M260 155h1M257 156h1M254 158h1M251 160h1M248 162h1M245 164h1M242 166h1M239 168h1M236 170h1M233 171h1M230 173h1M227 175h1M224 177h1M221 179h1M218 181h1M215 183h1M212 184h1M209 186h1M206 188h1M203 190h1M200 192h1M197 194h1M194 196h1M191 197h1M188 199h1M185 201h1M182 203h1M179 205h1M176 207h1M173 209h1M170 210h1M167 212h1M164 214h1M161 216h1M158 218h1M155 220h1M152 222h1M149 223h1M146 225h1M143 227h1M140 229h1M137 231h1M134 233h1M131 235h1M128 237h1M125 238h1" stroke="#00ff00"/>
<path d="M254 127h1M255 130h1M256 133h1M257 136h1M258 139h1M259 142h1M260 145h1M262 148h1M263 151h1M264 154h1M265 157h1M266 160h1M267 163h1M268 166h1M269 169h1M270 172h1M272 175h1M273 178h1M274 181h1M275 184h1M276 187h1M277 190h1M278 193h1M279 196h1M281 199h1M282 202h1M283 205h1M284 208h1M285 211h1M286 214h1M287 217h1M288 220h1M289 223h1M291 226h1M292 229h1M293 232h1M294 235h1M295 238h1M296 241h1M297 244h1M298 247h1M299 250h1M301 253h1M302 256h1M303 259h1M304 262h1M305 265h1M306 268h1M307 271h1M308 274h1M310 277h1M311 280h1M312 283h1M313 286h1M314 289h1M315 292h1M316 295h1M317 298h1M318 301h1M320 304h1M321 307h1M322 310h1M323 313h1M324 316h1" stroke="#00ff00"/>
<path d="M128 262h1M132 263h1M136 264h1M140 265h1M144 266h1M148 267h1M152 268h1M156 269h1M160 270h1M164 272h1M168 273h1M172 274h1M176 275h1M180 276h1M184 277h1M188 278h1M192 279h1M196 280h1M200 282h1M204 283h1M208 284h1M212 285h1M216 286h1M220 287h1M224 288h1M228 289h1M232 290h1M236 292h1M240 293h1M244 294h1M248 295h1M252 296h1M256 297h1M260 298h1M264 299h1M268 300h1M272 302h1M276 303h1M280 304h1M284 305h1M288 306h1M292 307h1M296 308h1M300 309h1M304 310h1M308 312h1M312 313h1M316 314h1M320 315h1M324 316h1" stroke="#00ff00"/>
<path d="M253 125h1M254 126h2M256 127h1M257 128h1M258 129h2M260 130h1M261 131h1M262 132h2M264 133h1M265 134h1M266 135h2M268 136h1M269 137h1M270 138h2M272 139h1M273 140h1M274 141h2M276 142h1M277 143h1M278 144h2M280 145h1M281 146h1M282 147h2M284 148h1M285 149h1M286 150h2M288 151h1M289 152h1M290 153h2M292 154h1M293 155h1M294 156h2M296 157h1M297 158h1M298 159h2M300 160h1M301 161h1M302 162h2M304 163h1M305 164h1M306 165h2M308 166h1M309 167h1M310 168h2M312 169h1M313 170h1M314 171h2M316 172h1M317 173h1M318 174h2M320 175h1M321 176h1M322 177h2M324 178h1M325 179h1M326 180h2M328 181h1M329 182h1M330 183h2M332 184h1M333 185h1M334 186h2M336 187h1M337 188h1M338 189h2M340 190h1M341 191h1M342 192h2M344 193h1" stroke="#00ffff"/>
<path d="M244 124h1M247 126h1M250 128h1M253 130h1M256 132h1M259 134h1M262 136h1M265 138h1M268 141h1M271 143h1M274 145h1M277 147h1M280 149h1M283 151h1M286 153h1M289 155h1M292 157h1M295 159h1M298 161h1M301 163h1M304 165h1M307 167h1M310 170h1M313 172h1M316 174h1M319 176h1M322 178h1M325 180h1M328 182h1M331 184h1M334 186h1M337 188h1M340 190h1M343 192h1" stroke="#00ffff"/>
<path d="M290 136h1M290 137h1M291 138h1M291 139h1M291 140h1M292 141h1M292 142h1M292 143h1M293 144h1M293 145h1M293 146h1M294 147h1M294 148h1M295 149h1M295 150h1M295 151h1M296 152h1M296 153h1M296 154h1M297 155h1M297 156h1M297 157h1M298 158h1M298 159h1M298 160h1M299 161h1M299 162h1M299 163h1M300 164h1M300 165h1M300 166h1M301 167h1M301 168h1M302 169h1M302 170h1M302 171h1M303 172h1M303 173h1M303 174h1M304 175h1M304 176h1M304 177h1M305 178h1M305 179h1M305 180h1M306 181h1M306 182h1M306 183h1M307 184h1M307 185h1M307 186h1M308 187h1M308 188h1M308 189h1M309 190h1M309 191h1M310 192h1M310 193h1M310 194h1M311 195h1M311 196h1M311 197h1M312 198h1M312 199h1M312 200h1M313 201h1M313 202h1M313 203h1M314 204h1M314 205h1M314 206h1M315 207h1M315 208h1M315 209h1M316 210h1M316 211h1M317 212h1M317 213h1M317 214h1M318 215h1M318 216h1M318 217h1M319 218h1M319 219h1M319 220h1M320 221h1M320 222h1M320 223h1M321 224h1M321 225h1M321 226h1M322 227h1M322 228h1M322 229h1M323 230h1M323 231h1M323 232h1M324 233h1M324 234h1M325 235h1M325 236h1M325 237h1M326 238h1M326 239h1M326 240h1M327 241h1M327 242h1M327 243h1M328 244h1M328 245h1M328 246h1M329 247h1M329 248h1M329 249h1M330 250h1M330 251h1M330 252h1M331 253h1M331 254h1M331 255h1M332 256h1M332 257h1M333 258h1M333 259h1M333 260h1M334 261h1M334 262h1M334 263h1M335 264h1M335 265h1M335 266h1M336 267h1M336 268h1M336 269h1M337 270h1M337 271h1M337 272h1M338 273h1M338 274h1M338 275h1M339 276h1M339 277h1M340 278h1M340 279h1M340 280h1M341 281h1M341 282h1M341 283h1M342 284h1M342 285h1M342 286h1M343 287h1M343 288h1" stroke="#ff0000"/>
<path d="M290 136h1M291 139h1M292 142h1M293 145h1M294 148h1M296 151h1M297 154h1M298 157h1M299 160h1M300 163h1M301 166h1M302 169h1M303 172h1M305 175h1M306 178h1M307 181h1M308 184h1M309 187h1M310 190h1M311 193h1M312 196h1M314 199h1M315 202h1M316 205h1M317 208h1M318 211h1M319 214h1M320 217h1M321 220h1M323 223h1M324 226h1M325 229h1M326 232h1M327 235h1M328 238h1M329 241h1M330 244h1M332 247h1M333 250h1M334 253h1M335 256h1M336 259h1M337 262h1M338 265h1M339 268h1M341 271h1M342 274h1M343 277h1M344 280h1M345 283h1" stroke="#ff0000"/>
<path d="M307 148h1M308 152h1M308 156h1M308 160h1M309 164h1M309 168h1M310 172h1M310 176h1M310 180h1M311 184h1M311 188h1M312 192h1M312 196h1M312 200h1M313 204h1M313 208h1M314 212h1M314 216h1M314 220h1M315 224h1M315 228h1M316 232h1M316 236h1M316 240h1M317 244h1M317 248h1M318 252h1M318 256h1M318 260h1M319 264h1M319 268h1M320 272h1M320 276h1M320 280h1M321 284h1M321 288h1M322 292h1M322 296h1M322 300h1M323 304h1M323 308h1M324 312h1M324 316h1" stroke="#ff0000"/>
<path d="M333 174h1M333 175h1M333 176h1M333 177h1M333 178h1M333 179h1M334 180h1M334 181h1M334 182h1M334 183h1M334 184h1M334 185h1M334 186h1M334 187h1M334 188h1M334 189h1M334 190h1M334 191h1M335 192h1M335 193h1M335 194h1M335 195h1M335 196h1M335 197h1M335 198h1M335 199h1M335 200h1M335 201h1M335 202h1M336 203h1M336 204h1M336 205h1M336 206h1M336 207h1M336 208h1M336 209h1M336 210h1M336 211h1M336 212h1M336 213h1M337 214h1M337 215h1M337 216h1M337 217h1M337 218h1M337 219h1M337 220h1M337 221h1M337 222h1M337 223h1M337 224h1M337 225h1M338 226h1M338 227h1M338 228h1M338 229h1M338 230h1M338 231h1M338 232h1M338 233h1M338 234h1M338 235h1M338 236h1M339 237h1M339 238h1M339 239h1M339 240h1M339 241h1M339 242h1M339 243h1M339 244h1M339 245h1M339 246h1M339 247h1M339 248h1M340 249h1M340 250h1M340 251h1M340 252h1M340 253h1M340 254h1M340 255h1M340 256h1M340 257h1M340 258h1M340 259h1M341 260h1M341 261h1M341 262h1M341 263h1M341 264h1M341 265h1M341 266h1M341 267h1M341 268h1M341 269h1M341 270h1M342 271h1M342 272h1M342 273h1M342 274h1M342 275h1M342 276h1M342 277h1M342 278h1M342 279h1M342 280h1M342 281h1M342 282h1M343 283h1M343 284h1M343 285h1M343 286h1M343 287h1M343 288h1" stroke="#00ffff"/>
<path d="M333 175h1M333 177h1M334 179h1M334 181h1M334 183h1M334 185h1M334 187h1M335 189h1M335 191h1M335 193h1M335 195h1M336 197h1M336 199h1M336 201h1M336 203h1M336 205h1M337 207h1M337 209h1M337 211h1M337 213h1M338 215h1M338 217h1M338 219h1M338 221h1M338 223h1M339 225h1M339 227h1M339 229h1M339 231h1M339 233h1M340 235h1M340 237h1M340 239h1M340 241h1M341 243h1M341 245h1M341 247h1M341 249h1M341 251h1M342 253h1M342 255h1M342 257h1M342 259h1M343 261h1M343 263h1M343 265h1M343 267h1M343 269h1M344 271h1M344 273h1M344 275h1M344 277h1M345 279h1M345 281h1M345 283h1" stroke="#00ffff"/>
<path d="M344 196h1M343 200h1M342 204h1M342 208h1M341 212h1M340 216h1M340 220h1M339 224h1M338 228h1M338 232h1M337 236h1M336 240h1M336 244h1M335 248h1M334 252h1M334 256h1M333 260h1M332 264h1M332 268h1M331 272h1M331 276h1M330 280h1M329 284h1M329 288h1M328 292h1M327 296h1M327 300h1M326 304h1M325 308h1M325 312h1M324 316h1" stroke="#00ffff"/>
<path d="M244 124h1M247 124h1M250 125h1M253 125h1" stroke="#ffff00"/>
<path d="M345 283h1M344 285h1M343 287h1" stroke="#ffff00"/>
<path d="M625 106h2M630 106h2M624 107h1M627 107h1M629 107h1M632 107h1M624 108h1M627 108h1M629 108h1M632 108h1M625 109h1M627 109h1M629 109h1M631 109h1M628 110h1M628 111h1M628 112h1M628 113h1M628 114h1" stroke="#ff0000"/>
<path d="M625 116h1M631 116h1M626 117h1M630 117h1M627 118h3M626 119h1M630 119h1M625 120h1M631 120h1M625 121h1M631 121h1M625 122h1M631 122h1M626 123h1M630 123h1M627 124h3" stroke="#ffff00"/>
<path d="M625 126h1M632 126h1M626 127h6M627 128h1M630 128h1M627 129h1M630 129h1M627 130h1M630 130h1M627 131h1M630 131h1M627 132h1M630 132h1M626 133h6M625 134h1M632 134h1" stroke="#00ff00"/>
<path d="M627 137h3M625 138h2M630 138h2M624 139h1M629 139h1M632 139h1M625 140h2M629 140h1M632 140h1M624 141h1M627 141h1M630 141h2M624 142h1M627 142h1M632 142h1M625 143h2M630 143h2M627 144h3" stroke="#00ffff"/>
<path d="M627 147h3M625 148h2M630 148h2M624 149h1M629 149h1M632 149h1M625 150h2M629 150h1M632 150h1M624 151h1M627 151h1M630 151h2M624 152h1M627 152h1M632 152h1M625 153h2M630 153h2M627 154h3" stroke="#ff0000"/>
<path d="M627 156h3M626 157h1M630 157h1M625 158h1M631 158h1M625 159h1M631 159h1M625 160h1M631 160h1M626 161h1M630 161h1M624 162h1M626 162h1M630 162h1M625 163h1M631 163h1M632 164h1" stroke="#ffff00"/>
<path d="M627 168h3M626 169h1M630 169h1M626 170h1M630 170h1M624 171h4M629 171h4M624 173h9" stroke="#00ff00"/>
<path d="M624 176h1M626 176h1M628 176h1M625 177h1M627 177h1M629 177h1M625 178h1M627 178h1M629 178h1M625 179h1M627 179h1M629 179h1M625 180h1M627 180h1M629 180h1M625 181h1M627 181h1M629 181h1M625 182h1M627 182h1M629 182h1M632 182h1M625 183h1M627 183h1M629 183h1M632 183h1M630 184h2" stroke="#00ffff"/>
<path d="M630 186h3M631 187h2M630 188h1M632 188h1M625 189h1M629 189h1M626 190h1M628 190h1M627 191h1M626 192h1M628 192h1M625 193h1M629 193h1M624 194h1" stroke="#ff0000"/>
<path d="M624 196h2M629 196h4M626 197h3M631 197h1M630 198h1M629 199h1M628 200h4M627 201h3M632 201h1M626 202h1M628 202h1M632 202h1M626 203h1M628 203h1M632 203h1M625 204h1M629 204h3" stroke="#ffff00"/>
<path d="M624 206h2M629 206h4M626 207h3M631 207h1M630 208h1M629 209h1M628 210h4M627 211h3M632 211h1M626 212h1M628 212h1M632 212h1M626 213h1M628 213h1M632 213h1M625 214h1M629 214h3" stroke="#00ff00"/>
<path d="M626 216h1M629 216h1M632 216h1M625 217h2M628 217h2M631 217h1M625 218h1M627 218h2M630 218h2M624 219h1M627 219h1M630 219h1M626 221h1M629 221h1M632 221h1M625 222h2M628 222h2M631 222h1M625 223h1M627 223h2M630 223h2M624 224h1M627 224h1M630 224h1" stroke="#00ffff"/>
<path d="M627 236h3M625 237h2M630 237h2M625 238h1M631 238h1M624 239h1M632 239h1M624 240h1M628 240h1M632 240h1M624 241h1M632 241h1M625 242h1M631 242h1M625 243h2M630 243h2M627 244h3" stroke="#ff0000"/>
<path d="M626 246h3M625 247h1M629 247h2M626 248h1M630 248h1M627 249h1M631 249h1M627 250h1M631 250h1M627 251h1M631 251h1M626 252h1M630 252h1M625 253h1M629 253h2M626 254h3" stroke="#00ffff"/>
<path d="M626 256h1M630 256h1M627 257h3M626 258h1M630 258h1M626 259h1M630 259h1M626 260h1M630 260h1M627 261h3M628 262h1M626 263h5M628 264h1" stroke="#00ff00"/>
<path d="M627 266h3M626 267h1M630 267h1M626 268h1M630 268h1M626 269h1M630 269h1M627 270h3M628 271h1M626 272h5M628 273h1M628 274h1" stroke="#ffff00"/>
<path d="M630 276h3M631 277h2M630 278h1M632 278h1M626 279h2M629 279h1M625 280h1M628 280h1M624 281h1M629 281h1M624 282h1M629 282h1M625 283h1M628 283h1M626 284h2" stroke="#ff0000"/>
<path d="M631 286h1M625 287h2M630 287h1M627 288h1M630 288h1M627 289h1M630 289h1M626 290h1M630 290h1M626 291h1M630 291h1M625 292h1M630 292h1M625 293h8M630 294h1" stroke="#ff0000"/>
<path d="M627 296h1M625 297h5M627 298h1M627 299h1M629 299h2M627 300h2M631 300h1M627 301h1M631 301h1M627 302h1M630 302h1M627 303h1M630 303h1M631 304h1" stroke="#ffff00"/>
<path d="M628 306h1M627 307h3M626 308h1M628 308h1M630 308h1M628 309h1M627 310h3M626 311h1M630 311h1M626 312h1M628 312h1M630 312h1M626 313h1M630 313h1M627 314h3" stroke="#00ff00"/>
<path d="M625 316h1M628 316h1M631 316h1M624 317h2M627 317h3M631 317h2M625 318h1M628 318h1M631 318h1M626 319h1M628 319h1M630 319h1M627 320h3M628 321h1M626 322h5M628 323h1M628 324h1" stroke="#00ffff"/>
<path d="M625 326h6M625 327h1M631 327h1M625 328h1M631 328h1M625 329h1M631 329h1M625 330h6M625 331h1M625 332h1M625 333h1M625 334h6" stroke="#00ffff"/>
<path d="M627 336h3M626 337h1M630 337h1M625 338h1M631 338h1M625 339h1M631 339h1M625 340h1M631 340h1M626 341h1M630 341h1M625 342h2M630 342h2M624 343h1M626 343h1M630 343h1M632 343h1M625 344h1M631 344h1" stroke="#007f7f"/>
</g>
<g shape-rendering="crispEdges" fill="#bfbfbf">
<rect x="0" y="0" width="640" height="1"/><rect x="0" y="479" width="640" height="1"/><rect x="0" y="0" width="1" height="480"/><rect x="639" y="0" width="1" height="480"/><rect x="479" y="0" width="1" height="480"/>
</g>
<g xml:space="preserve">
<text class="h" fill="#ff0000" stroke="#ff0000" text-anchor="middle" transform="translate(80.5 296.7) scale(.9 1)">1</text>
<text class="h" fill="#ffff00" stroke="#ffff00" text-anchor="middle" transform="translate(133.5 373.7) scale(.9 1)">2</text>
<text class="h" fill="#00ff00" stroke="#00ff00" text-anchor="middle" transform="translate(199.5 406.7) scale(.9 1)">3</text>
<text class="h" fill="#00ffff" stroke="#00ffff" text-anchor="middle" transform="translate(267.5 408.7) scale(.9 1)">4</text>
<text class="h" fill="#ff0000" stroke="#ff0000" text-anchor="middle" transform="translate(338.5 378.7) scale(.9 1)">5</text>
<text class="h" fill="#ffff00" stroke="#ffff00" text-anchor="middle" transform="translate(397.5 299.7) scale(.9 1)">6</text>
<text class="h" fill="#00ff00" stroke="#00ff00" text-anchor="middle" transform="translate(398.5 190.7) scale(.9 1)">7</text>
<text class="h" fill="#00ffff" stroke="#00ffff" text-anchor="middle" transform="translate(345.5 113.7) scale(.9 1)">8</text>
<text class="h" fill="#ff0000" stroke="#ff0000" text-anchor="middle" transform="translate(279.5 80.7) scale(.9 1)">9</text>
<text class="h" fill="#ffff00" stroke="#ffff00" text-anchor="middle" transform="translate(211.5 78.7) scale(.9 1)" style="letter-spacing:1.6px">10</text>
<text class="h" fill="#00ff00" stroke="#00ff00" text-anchor="middle" transform="translate(140.5 108.7) scale(.9 1)" style="letter-spacing:1.6px">11</text>
<text class="h" fill="#00ffff" stroke="#00ffff" text-anchor="middle" transform="translate(81.5 187.7) scale(.9 1)" style="letter-spacing:1.6px">12</text>
<text x="223.5" y="103.7" fill="#ffff00" stroke="#ffff00" style="font-size:24px" class="n b" textLength="18" lengthAdjust="spacingAndGlyphs">MC</text>
<text x="86.5" y="247.7" fill="#ff0000" stroke="#ff0000" style="font-size:24px" class="n b" textLength="18" lengthAdjust="spacingAndGlyphs">Asc</text>
<text x="486" y="14" fill="#ffffff" stroke="#ffffff">Astrolog 5.41F</text>
<text x="486" y="24" fill="#bfbfbf" stroke="#bfbfbf">jerv</text>
<text x="486" y="34" fill="#bfbfbf" stroke="#bfbfbf">Thu 16 August 1984</text>
<text x="486" y="44" fill="#bfbfbf" stroke="#bfbfbf">20:30 (ST +8:00 GMT)</text>
<text x="486" y="54" fill="#bfbfbf" stroke="#bfbfbf">shanghai</text>
<text x="486" y="64" fill="#bfbfbf" stroke="#bfbfbf">121°28E 31°14N</text>
<text x="486" y="74" fill="#bfbfbf" stroke="#bfbfbf">Placidus houses.</text>
<text x="486" y="84" fill="#bfbfbf" stroke="#bfbfbf">Tropical, Geocentric.</text>
<text x="486" y="94" fill="#bfbfbf" stroke="#bfbfbf">Julian Day = 2445929.0208</text>
<text x="486" y="114" fill="#ff0000" stroke="#ff0000"> 1st house: </text>
<text x="558" y="114" fill="#ff0000" stroke="#ff0000"> 5Ari59</text>
<text x="486" y="124" fill="#ffff00" stroke="#ffff00"> 2nd house: </text>
<text x="558" y="124" fill="#ffff00" stroke="#ffff00">13Tau05</text>
<text x="486" y="134" fill="#00ff00" stroke="#00ff00"> 3rd house: </text>
<text x="558" y="134" fill="#00ff00" stroke="#00ff00">10Gem24</text>
<text x="486" y="144" fill="#00ffff" stroke="#00ffff"> 4th house: </text>
<text x="558" y="144" fill="#00ffff" stroke="#00ffff"> 3Can43</text>
<text x="486" y="154" fill="#ff0000" stroke="#ff0000"> 5th house: </text>
<text x="558" y="154" fill="#00ffff" stroke="#00ffff">27Can35</text>
<text x="486" y="164" fill="#ffff00" stroke="#ffff00"> 6th house: </text>
<text x="558" y="164" fill="#ff0000" stroke="#ff0000">26Leo37</text>
<text x="486" y="174" fill="#00ff00" stroke="#00ff00"> 7th house: </text>
<text x="558" y="174" fill="#00ff00" stroke="#00ff00"> 5Lib59</text>
<text x="486" y="184" fill="#00ffff" stroke="#00ffff"> 8th house: </text>
<text x="558" y="184" fill="#00ffff" stroke="#00ffff">13Sco05</text>
<text x="486" y="194" fill="#ff0000" stroke="#ff0000"> 9th house: </text>
<text x="558" y="194" fill="#ff0000" stroke="#ff0000">10Sag24</text>
<text x="486" y="204" fill="#ffff00" stroke="#ffff00">10th house: </text>
<text x="558" y="204" fill="#ffff00" stroke="#ffff00"> 3Cap43</text>
<text x="486" y="214" fill="#00ff00" stroke="#00ff00">11th house: </text>
<text x="558" y="214" fill="#ffff00" stroke="#ffff00">27Cap35</text>
<text x="486" y="224" fill="#00ffff" stroke="#00ffff">12th house: </text>
<text x="558" y="224" fill="#00ff00" stroke="#00ff00">26Aqu37</text>
<text x="486" y="244" fill="#ff0000" stroke="#ff0000"> Sun: </text>
<text x="522" y="244" fill="#ff0000" stroke="#ff0000">23Leo48</text>
<text x="576" y="244" fill="#bfbfbf" stroke="#bfbfbf">- 0°00'</text>
<text x="486" y="254" fill="#00ffff" stroke="#00ffff">Moon: </text>
<text x="522" y="254" fill="#ff0000" stroke="#ff0000">17Ari17</text>
<text x="576" y="254" fill="#bfbfbf" stroke="#bfbfbf">- 3°35'</text>
<text x="486" y="264" fill="#00ff00" stroke="#00ff00">Merc: </text>
<text x="522" y="264" fill="#ffff00" stroke="#ffff00">13Vir16</text>
<text x="564" y="264" fill="#ffffff" stroke="#ffffff">R</text>
<text x="576" y="264" fill="#bfbfbf" stroke="#bfbfbf">- 4°13'</text>
<text x="486" y="274" fill="#ffff00" stroke="#ffff00">Venu: </text>
<text x="522" y="274" fill="#ffff00" stroke="#ffff00">10Vir42</text>
<text x="576" y="274" fill="#bfbfbf" stroke="#bfbfbf">+ 1°26'</text>
<text x="486" y="284" fill="#ff0000" stroke="#ff0000">Mars: </text>
<text x="522" y="284" fill="#00ffff" stroke="#00ffff">29Sco19</text>
<text x="576" y="284" fill="#bfbfbf" stroke="#bfbfbf">- 2°22'</text>
<text x="486" y="294" fill="#ff0000" stroke="#ff0000">Jupi: </text>
<text x="522" y="294" fill="#ffff00" stroke="#ffff00"> 3Cap25</text>
<text x="564" y="294" fill="#ffffff" stroke="#ffffff">R</text>
<text x="576" y="294" fill="#bfbfbf" stroke="#bfbfbf">- 0°03'</text>
<text x="486" y="304" fill="#ffff00" stroke="#ffff00">Satu: </text>
<text x="522" y="304" fill="#00ffff" stroke="#00ffff">10Sco38</text>
<text x="576" y="304" fill="#bfbfbf" stroke="#bfbfbf">+ 2°15'</text>
<text x="486" y="314" fill="#00ff00" stroke="#00ff00">Uran: </text>
<text x="522" y="314" fill="#ff0000" stroke="#ff0000"> 9Sag32</text>
<text x="564" y="314" fill="#ffffff" stroke="#ffffff">R</text>
<text x="576" y="314" fill="#bfbfbf" stroke="#bfbfbf">+ 0°01'</text>
<text x="486" y="324" fill="#00ffff" stroke="#00ffff">Nept: </text>
<text x="522" y="324" fill="#ff0000" stroke="#ff0000">28Sag49</text>
<text x="564" y="324" fill="#ffffff" stroke="#ffffff">R</text>
<text x="576" y="324" fill="#bfbfbf" stroke="#bfbfbf">+ 1°11'</text>
<text x="486" y="334" fill="#00ffff" stroke="#00ffff">Plut: </text>
<text x="522" y="334" fill="#00ff00" stroke="#00ff00">29Lib43</text>
<text x="576" y="334" fill="#bfbfbf" stroke="#bfbfbf">+16°36'</text>
<text x="486" y="344" fill="#007f7f" stroke="#007f7f">Node: </text>
<text x="522" y="344" fill="#00ff00" stroke="#00ff00"> 2Gem26</text>
<text x="564" y="344" fill="#ffffff" stroke="#ffffff">R</text>
<text x="576" y="344" fill="#bfbfbf" stroke="#bfbfbf">+ 0°00'</text>
<text x="486" y="354" fill="#ff0000" stroke="#ff0000">Asce: </text>
<text x="522" y="354" fill="#ff0000" stroke="#ff0000"> 5Ari59</text>
<text x="624" y="354.5" fill="#ff0000" stroke="#ff0000" style="font-size:12px" class="n s" textLength="9" lengthAdjust="spacingAndGlyphs">Asc</text>
<text x="486" y="364" fill="#ffff00" stroke="#ffff00">Midh: </text>
<text x="522" y="364" fill="#ffff00" stroke="#ffff00"> 3Cap43</text>
<text x="624" y="364.5" fill="#ffff00" stroke="#ffff00" style="font-size:12px" class="n s" textLength="9" lengthAdjust="spacingAndGlyphs">MC</text>
<text x="486" y="384" fill="#bfbfbf" stroke="#bfbfbf">Fire: 5, Earth: 4,</text>
<text x="486" y="394" fill="#bfbfbf" stroke="#bfbfbf">Air : 2, Water: 2</text>
<text x="486" y="404" fill="#bfbfbf" stroke="#bfbfbf">Car: 5, Fix: 3, Mut: 5</text>
<text x="486" y="414" fill="#bfbfbf" stroke="#bfbfbf">Yang: 7, Yin: 6</text>
<text x="486" y="424" fill="#bfbfbf" stroke="#bfbfbf">M: 6, N: 5, A: 2, D: 9</text>
<text x="486" y="434" fill="#bfbfbf" stroke="#bfbfbf">Ang: 3, Suc: 4, Cad: 4</text>
<text x="486" y="444" fill="#bfbfbf" stroke="#bfbfbf">Learn: 6, Share: 7</text>
</g>
</svg>
</div>
</body></html>
